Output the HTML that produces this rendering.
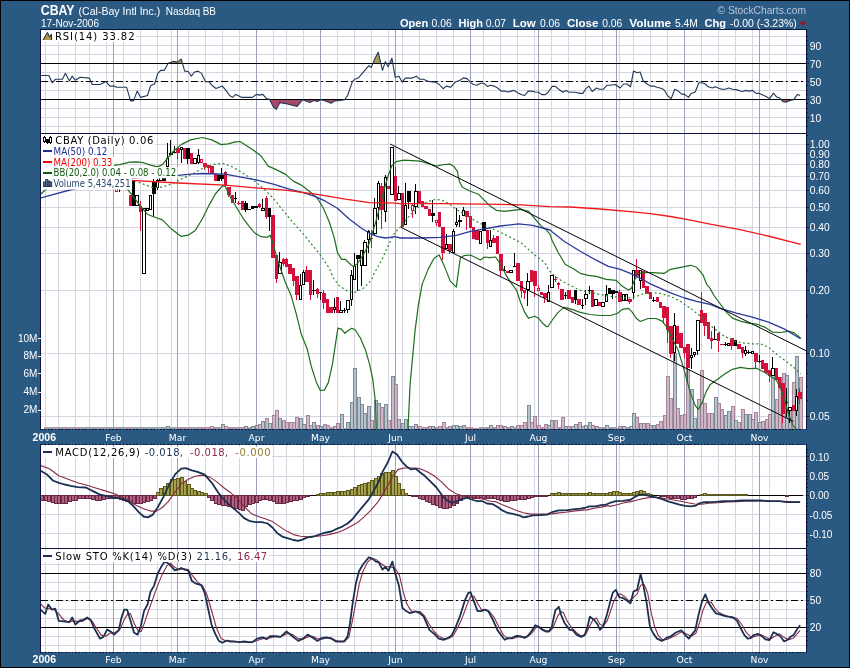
<!DOCTYPE html>
<html><head><meta charset="utf-8"><title>CBAY - StockCharts</title>
<style>html,body{margin:0;padding:0;background:#2a5982;}svg text{white-space:pre}</style></head>
<body>
<svg width="850" height="668" viewBox="0 0 850 668" style="display:block;will-change:transform">
<rect x="0" y="0" width="850" height="668" fill="#2a5982"/>
<rect x="0.5" y="0.5" width="849" height="667" fill="none" stroke="#000" stroke-width="1"/>
<defs>
<clipPath id="cr"><rect x="41" y="30" width="766" height="103"/></clipPath>
<clipPath id="cp"><rect x="41" y="134" width="766" height="295"/></clipPath>
<clipPath id="cm"><rect x="41" y="445" width="766" height="103"/></clipPath>
<clipPath id="cs"><rect x="41" y="549" width="766" height="103"/></clipPath>
</defs>
<rect x="41" y="30" width="766" height="103" fill="#fff"/>
<g clip-path="url(#cr)" shape-rendering="crispEdges">
<line x1="41" x2="807" y1="126.5" y2="126.5" stroke="#d6d6e3"/>
<line x1="41" x2="807" y1="117.5" y2="117.5" stroke="#d6d6e3"/>
<line x1="41" x2="807" y1="108.5" y2="108.5" stroke="#d6d6e3"/>
<line x1="41" x2="807" y1="99.5" y2="99.5" stroke="#d6d6e3"/>
<line x1="41" x2="807" y1="90.5" y2="90.5" stroke="#d6d6e3"/>
<line x1="41" x2="807" y1="81.5" y2="81.5" stroke="#d6d6e3"/>
<line x1="41" x2="807" y1="72.5" y2="72.5" stroke="#d6d6e3"/>
<line x1="41" x2="807" y1="63.5" y2="63.5" stroke="#d6d6e3"/>
<line x1="41" x2="807" y1="54.5" y2="54.5" stroke="#d6d6e3"/>
<line x1="41" x2="807" y1="45.5" y2="45.5" stroke="#d6d6e3"/>
<line x1="41" x2="807" y1="36.5" y2="36.5" stroke="#d6d6e3"/>
<line x1="45.5" x2="45.5" y1="30" y2="133" stroke="#d6d6e3"/>
<line x1="58.5" x2="58.5" y1="30" y2="133" stroke="#d6d6e3"/>
<line x1="75.5" x2="75.5" y1="30" y2="133" stroke="#d6d6e3"/>
<line x1="89.5" x2="89.5" y1="30" y2="133" stroke="#d6d6e3"/>
<line x1="106.5" x2="106.5" y1="30" y2="133" stroke="#d6d6e3"/>
<line x1="123.5" x2="123.5" y1="30" y2="133" stroke="#d6d6e3"/>
<line x1="140.5" x2="140.5" y1="30" y2="133" stroke="#d6d6e3"/>
<line x1="157.5" x2="157.5" y1="30" y2="133" stroke="#d6d6e3"/>
<line x1="171.5" x2="171.5" y1="30" y2="133" stroke="#d6d6e3"/>
<line x1="188.5" x2="188.5" y1="30" y2="133" stroke="#d6d6e3"/>
<line x1="205.5" x2="205.5" y1="30" y2="133" stroke="#d6d6e3"/>
<line x1="222.5" x2="222.5" y1="30" y2="133" stroke="#d6d6e3"/>
<line x1="239.5" x2="239.5" y1="30" y2="133" stroke="#d6d6e3"/>
<line x1="256.5" x2="256.5" y1="30" y2="133" stroke="#d6d6e3"/>
<line x1="273.5" x2="273.5" y1="30" y2="133" stroke="#d6d6e3"/>
<line x1="286.5" x2="286.5" y1="30" y2="133" stroke="#d6d6e3"/>
<line x1="303.5" x2="303.5" y1="30" y2="133" stroke="#d6d6e3"/>
<line x1="320.5" x2="320.5" y1="30" y2="133" stroke="#d6d6e3"/>
<line x1="337.5" x2="337.5" y1="30" y2="133" stroke="#d6d6e3"/>
<line x1="354.5" x2="354.5" y1="30" y2="133" stroke="#d6d6e3"/>
<line x1="371.5" x2="371.5" y1="30" y2="133" stroke="#d6d6e3"/>
<line x1="388.5" x2="388.5" y1="30" y2="133" stroke="#d6d6e3"/>
<line x1="402.5" x2="402.5" y1="30" y2="133" stroke="#d6d6e3"/>
<line x1="419.5" x2="419.5" y1="30" y2="133" stroke="#d6d6e3"/>
<line x1="436.5" x2="436.5" y1="30" y2="133" stroke="#d6d6e3"/>
<line x1="453.5" x2="453.5" y1="30" y2="133" stroke="#d6d6e3"/>
<line x1="470.5" x2="470.5" y1="30" y2="133" stroke="#d6d6e3"/>
<line x1="483.5" x2="483.5" y1="30" y2="133" stroke="#d6d6e3"/>
<line x1="500.5" x2="500.5" y1="30" y2="133" stroke="#d6d6e3"/>
<line x1="517.5" x2="517.5" y1="30" y2="133" stroke="#d6d6e3"/>
<line x1="534.5" x2="534.5" y1="30" y2="133" stroke="#d6d6e3"/>
<line x1="551.5" x2="551.5" y1="30" y2="133" stroke="#d6d6e3"/>
<line x1="568.5" x2="568.5" y1="30" y2="133" stroke="#d6d6e3"/>
<line x1="585.5" x2="585.5" y1="30" y2="133" stroke="#d6d6e3"/>
<line x1="602.5" x2="602.5" y1="30" y2="133" stroke="#d6d6e3"/>
<line x1="619.5" x2="619.5" y1="30" y2="133" stroke="#d6d6e3"/>
<line x1="633.5" x2="633.5" y1="30" y2="133" stroke="#d6d6e3"/>
<line x1="650.5" x2="650.5" y1="30" y2="133" stroke="#d6d6e3"/>
<line x1="667.5" x2="667.5" y1="30" y2="133" stroke="#d6d6e3"/>
<line x1="684.5" x2="684.5" y1="30" y2="133" stroke="#d6d6e3"/>
<line x1="701.5" x2="701.5" y1="30" y2="133" stroke="#d6d6e3"/>
<line x1="718.5" x2="718.5" y1="30" y2="133" stroke="#d6d6e3"/>
<line x1="735.5" x2="735.5" y1="30" y2="133" stroke="#d6d6e3"/>
<line x1="752.5" x2="752.5" y1="30" y2="133" stroke="#d6d6e3"/>
<line x1="769.5" x2="769.5" y1="30" y2="133" stroke="#d6d6e3"/>
<line x1="786.5" x2="786.5" y1="30" y2="133" stroke="#d6d6e3"/>
<line x1="113.5" x2="113.5" y1="30" y2="133" stroke="#9aa2bc"/>
<line x1="177.5" x2="177.5" y1="30" y2="133" stroke="#9aa2bc"/>
<line x1="256.5" x2="256.5" y1="30" y2="133" stroke="#9aa2bc"/>
<line x1="320.5" x2="320.5" y1="30" y2="133" stroke="#9aa2bc"/>
<line x1="395.5" x2="395.5" y1="30" y2="133" stroke="#9aa2bc"/>
<line x1="470.5" x2="470.5" y1="30" y2="133" stroke="#9aa2bc"/>
<line x1="538.5" x2="538.5" y1="30" y2="133" stroke="#9aa2bc"/>
<line x1="616.5" x2="616.5" y1="30" y2="133" stroke="#9aa2bc"/>
<line x1="684.5" x2="684.5" y1="30" y2="133" stroke="#9aa2bc"/>
<line x1="759.5" x2="759.5" y1="30" y2="133" stroke="#9aa2bc"/>
</g>
<g clip-path="url(#cr)">
<polygon points="168.2,63.3 168.2,63.3 172.9,61.4 177.2,62.1 181.2,59.1 182.4,63.3" fill="#a89a50"/>
<polygon points="372.9,63.3 374.7,59.1 378.2,52.2 380.8,63.3" fill="#a89a50"/>
<polygon points="384.8,63.3 385.3,61.6 386.2,63.3" fill="#a89a50"/>
<polygon points="389.6,63.3 391.9,58.1 392.8,63.3" fill="#a89a50"/>
<polygon points="130.1,99.3 130.6,100.9 133.4,100.9 134.0,99.3" fill="#a84868"/>
<polygon points="269.5,99.3 273.5,107.3 276.4,109.2 279.9,102.6 286.5,103.8 297.1,106.4 302.5,99.8 310.0,102.6 313.5,100.5 317.5,101.4 320.6,99.8 324.1,100.5 331.2,103.3 334.7,100.9 340.6,100.5 344.6,99.8 344.9,99.3" fill="#a84868"/>
<polygon points="780.9,99.3 782.9,101.6 786.5,102.1 790.0,100.5 793.5,99.8 793.9,99.3" fill="#a84868"/>
<line x1="41" x2="807" y1="63.5" y2="63.5" stroke="#000" stroke-width="1" shape-rendering="crispEdges"/>
<line x1="41" x2="807" y1="99.5" y2="99.5" stroke="#000" stroke-width="1" shape-rendering="crispEdges"/>
<line x1="41" x2="807" y1="81.5" y2="81.5" stroke="#000" stroke-width="1" stroke-dasharray="7 3 2 3" shape-rendering="crispEdges"/>
<polyline points="40.0,75.5 48.9,75.5 52.2,82.8 55.3,79.3 62.4,79.3 65.4,73.2 69.4,80.9 72.2,76.2 75.3,80.2 80.0,77.2 89.4,78.1 92.2,84.5 100.0,84.5 105.9,81.6 109.9,86.1 114.1,86.1 116.5,87.3 126.6,87.3 130.6,100.9 133.4,100.9 137.2,91.1 140.7,97.4 147.5,95.5 150.6,85.6 154.6,84.0 157.6,73.9 160.7,70.4 164.2,70.4 168.2,63.3 172.9,61.4 177.2,62.1 181.2,59.1 184.7,71.1 188.2,71.5 191.3,76.2 194.6,72.0 198.1,71.1 201.6,73.4 205.4,81.6 208.9,81.6 211.8,85.2 216.0,88.5 222.4,86.1 225.9,90.4 229.4,95.1 230.0,95.8 232.4,97.4 235.9,94.4 241.8,97.4 252.4,97.4 256.4,94.4 259.4,95.1 262.9,94.4 266.5,98.6 269.5,99.3 273.5,107.3 276.4,109.2 279.9,102.6 286.5,103.8 297.1,106.4 302.5,99.8 310.0,102.6 313.5,100.5 317.5,101.4 320.6,99.8 324.1,100.5 331.2,103.3 334.7,100.9 340.6,100.5 344.6,99.8 347.6,95.5 352.4,81.6 354.7,79.3 358.2,78.1 361.8,73.9 365.3,69.9 368.8,65.6 371.2,67.5 374.7,59.1 378.2,52.2 382.5,70.4 385.3,61.6 388.1,66.8 391.9,58.1 395.2,77.4 398.9,76.2 402.2,82.1 405.3,78.1 412.4,78.1 416.4,76.2 419.4,79.1 420.0,79.3 423.5,79.3 428.2,81.4 435.3,82.1 439.3,84.5 443.1,88.7 446.4,86.1 450.6,87.3 455.3,82.1 460.0,80.2 463.5,77.9 467.1,78.6 470.6,82.6 473.6,84.5 476.9,85.2 480.7,83.3 484.0,83.3 487.5,86.4 490.6,85.2 494.1,86.1 497.6,88.0 501.2,91.1 504.7,91.1 507.5,92.0 514.1,90.4 517.6,92.7 521.2,94.4 524.7,95.5 528.2,91.1 531.8,91.1 535.3,92.0 538.4,92.2 541.9,94.6 545.2,94.6 548.2,92.2 552.2,86.4 555.3,86.4 558.8,89.2 562.8,92.2 565.9,90.4 569.4,92.2 575.3,92.2 580.0,93.4 582.8,93.4 585.9,88.7 588.9,86.1 592.2,91.5 596.5,88.0 599.5,89.2 603.5,89.2 607.1,85.2 610.0,85.2 615.2,84.5 620.1,88.0 623.6,84.0 626.9,84.0 630.5,86.8 633.5,71.1 637.1,72.7 640.1,72.0 642.9,80.2 645.3,82.8 650.5,86.1 653.5,86.1 657.1,87.3 661.8,88.5 664.6,90.4 667.6,95.8 671.2,98.6 674.7,89.2 677.5,90.4 681.3,93.9 684.6,94.4 688.4,97.4 691.2,93.4 695.2,92.0 698.9,82.8 701.8,82.8 705.3,84.0 708.4,86.8 712.4,88.0 715.2,86.8 718.2,88.0 721.8,89.2 725.3,89.2 728.8,88.0 732.4,89.2 735.9,89.6 738.9,90.4 742.2,91.5 745.8,90.4 748.8,91.1 752.4,90.4 755.9,93.2 759.4,93.4 762.9,95.1 766.5,96.7 769.5,98.6 773.5,93.2 776.6,96.9 779.9,98.1 782.9,101.6 786.5,102.1 790.0,100.5 793.5,99.8 797.5,94.4 800.1,95.5" fill="none" stroke="#203858" stroke-width="1.1" stroke-linejoin="round"/>
</g>
<rect x="41" y="134" width="766" height="295" fill="#fff"/>
<g clip-path="url(#cp)" shape-rendering="crispEdges">
<line x1="41" x2="807" y1="144.5" y2="144.5" stroke="#d6d6e3"/>
<line x1="41" x2="807" y1="153.5" y2="153.5" stroke="#d6d6e3"/>
<line x1="41" x2="807" y1="164.5" y2="164.5" stroke="#d6d6e3"/>
<line x1="41" x2="807" y1="176.5" y2="176.5" stroke="#d6d6e3"/>
<line x1="41" x2="807" y1="190.5" y2="190.5" stroke="#d6d6e3"/>
<line x1="41" x2="807" y1="207.5" y2="207.5" stroke="#d6d6e3"/>
<line x1="41" x2="807" y1="227.5" y2="227.5" stroke="#d6d6e3"/>
<line x1="41" x2="807" y1="253.5" y2="253.5" stroke="#d6d6e3"/>
<line x1="41" x2="807" y1="290.5" y2="290.5" stroke="#d6d6e3"/>
<line x1="41" x2="807" y1="353.5" y2="353.5" stroke="#d6d6e3"/>
<line x1="41" x2="807" y1="416.5" y2="416.5" stroke="#d6d6e3"/>
<line x1="45.5" x2="45.5" y1="134" y2="429" stroke="#d6d6e3"/>
<line x1="58.5" x2="58.5" y1="134" y2="429" stroke="#d6d6e3"/>
<line x1="75.5" x2="75.5" y1="134" y2="429" stroke="#d6d6e3"/>
<line x1="89.5" x2="89.5" y1="134" y2="429" stroke="#d6d6e3"/>
<line x1="106.5" x2="106.5" y1="134" y2="429" stroke="#d6d6e3"/>
<line x1="123.5" x2="123.5" y1="134" y2="429" stroke="#d6d6e3"/>
<line x1="140.5" x2="140.5" y1="134" y2="429" stroke="#d6d6e3"/>
<line x1="157.5" x2="157.5" y1="134" y2="429" stroke="#d6d6e3"/>
<line x1="171.5" x2="171.5" y1="134" y2="429" stroke="#d6d6e3"/>
<line x1="188.5" x2="188.5" y1="134" y2="429" stroke="#d6d6e3"/>
<line x1="205.5" x2="205.5" y1="134" y2="429" stroke="#d6d6e3"/>
<line x1="222.5" x2="222.5" y1="134" y2="429" stroke="#d6d6e3"/>
<line x1="239.5" x2="239.5" y1="134" y2="429" stroke="#d6d6e3"/>
<line x1="256.5" x2="256.5" y1="134" y2="429" stroke="#d6d6e3"/>
<line x1="273.5" x2="273.5" y1="134" y2="429" stroke="#d6d6e3"/>
<line x1="286.5" x2="286.5" y1="134" y2="429" stroke="#d6d6e3"/>
<line x1="303.5" x2="303.5" y1="134" y2="429" stroke="#d6d6e3"/>
<line x1="320.5" x2="320.5" y1="134" y2="429" stroke="#d6d6e3"/>
<line x1="337.5" x2="337.5" y1="134" y2="429" stroke="#d6d6e3"/>
<line x1="354.5" x2="354.5" y1="134" y2="429" stroke="#d6d6e3"/>
<line x1="371.5" x2="371.5" y1="134" y2="429" stroke="#d6d6e3"/>
<line x1="388.5" x2="388.5" y1="134" y2="429" stroke="#d6d6e3"/>
<line x1="402.5" x2="402.5" y1="134" y2="429" stroke="#d6d6e3"/>
<line x1="419.5" x2="419.5" y1="134" y2="429" stroke="#d6d6e3"/>
<line x1="436.5" x2="436.5" y1="134" y2="429" stroke="#d6d6e3"/>
<line x1="453.5" x2="453.5" y1="134" y2="429" stroke="#d6d6e3"/>
<line x1="470.5" x2="470.5" y1="134" y2="429" stroke="#d6d6e3"/>
<line x1="483.5" x2="483.5" y1="134" y2="429" stroke="#d6d6e3"/>
<line x1="500.5" x2="500.5" y1="134" y2="429" stroke="#d6d6e3"/>
<line x1="517.5" x2="517.5" y1="134" y2="429" stroke="#d6d6e3"/>
<line x1="534.5" x2="534.5" y1="134" y2="429" stroke="#d6d6e3"/>
<line x1="551.5" x2="551.5" y1="134" y2="429" stroke="#d6d6e3"/>
<line x1="568.5" x2="568.5" y1="134" y2="429" stroke="#d6d6e3"/>
<line x1="585.5" x2="585.5" y1="134" y2="429" stroke="#d6d6e3"/>
<line x1="602.5" x2="602.5" y1="134" y2="429" stroke="#d6d6e3"/>
<line x1="619.5" x2="619.5" y1="134" y2="429" stroke="#d6d6e3"/>
<line x1="633.5" x2="633.5" y1="134" y2="429" stroke="#d6d6e3"/>
<line x1="650.5" x2="650.5" y1="134" y2="429" stroke="#d6d6e3"/>
<line x1="667.5" x2="667.5" y1="134" y2="429" stroke="#d6d6e3"/>
<line x1="684.5" x2="684.5" y1="134" y2="429" stroke="#d6d6e3"/>
<line x1="701.5" x2="701.5" y1="134" y2="429" stroke="#d6d6e3"/>
<line x1="718.5" x2="718.5" y1="134" y2="429" stroke="#d6d6e3"/>
<line x1="735.5" x2="735.5" y1="134" y2="429" stroke="#d6d6e3"/>
<line x1="752.5" x2="752.5" y1="134" y2="429" stroke="#d6d6e3"/>
<line x1="769.5" x2="769.5" y1="134" y2="429" stroke="#d6d6e3"/>
<line x1="786.5" x2="786.5" y1="134" y2="429" stroke="#d6d6e3"/>
<line x1="113.5" x2="113.5" y1="134" y2="429" stroke="#9aa2bc"/>
<line x1="177.5" x2="177.5" y1="134" y2="429" stroke="#9aa2bc"/>
<line x1="256.5" x2="256.5" y1="134" y2="429" stroke="#9aa2bc"/>
<line x1="320.5" x2="320.5" y1="134" y2="429" stroke="#9aa2bc"/>
<line x1="395.5" x2="395.5" y1="134" y2="429" stroke="#9aa2bc"/>
<line x1="470.5" x2="470.5" y1="134" y2="429" stroke="#9aa2bc"/>
<line x1="538.5" x2="538.5" y1="134" y2="429" stroke="#9aa2bc"/>
<line x1="616.5" x2="616.5" y1="134" y2="429" stroke="#9aa2bc"/>
<line x1="684.5" x2="684.5" y1="134" y2="429" stroke="#9aa2bc"/>
<line x1="759.5" x2="759.5" y1="134" y2="429" stroke="#9aa2bc"/>
</g>
<g clip-path="url(#cp)">
<g shape-rendering="crispEdges">
<rect x="44" y="427" width="4" height="2" fill="#c090a0"/>
<rect x="47" y="427" width="4" height="2" fill="#98a4ac"/>
<rect x="51" y="427" width="4" height="2" fill="#98a4ac"/>
<rect x="54" y="427" width="4" height="2" fill="#c090a0"/>
<rect x="57" y="427" width="4" height="2" fill="#98a4ac"/>
<rect x="61" y="427" width="4" height="2" fill="#98a4ac"/>
<rect x="64" y="427" width="4" height="2" fill="#c090a0"/>
<rect x="68" y="427" width="4" height="2" fill="#98a4ac"/>
<rect x="71" y="427" width="4" height="2" fill="#98a4ac"/>
<rect x="74" y="427" width="4" height="2" fill="#c090a0"/>
<rect x="78" y="427" width="4" height="2" fill="#98a4ac"/>
<rect x="81" y="427" width="4" height="2" fill="#98a4ac"/>
<rect x="85" y="427" width="4" height="2" fill="#c090a0"/>
<rect x="88" y="427" width="4" height="2" fill="#98a4ac"/>
<rect x="91" y="427" width="4" height="2" fill="#98a4ac"/>
<rect x="95" y="427" width="4" height="2" fill="#c090a0"/>
<rect x="98" y="427" width="4" height="2" fill="#98a4ac"/>
<rect x="102" y="427" width="4" height="2" fill="#98a4ac"/>
<rect x="105" y="427" width="4" height="2" fill="#c090a0"/>
<rect x="108" y="427" width="4" height="2" fill="#98a4ac"/>
<rect x="112" y="427" width="4" height="2" fill="#98a4ac"/>
<rect x="115" y="427" width="4" height="2" fill="#c090a0"/>
<rect x="119" y="427" width="4" height="2" fill="#98a4ac"/>
<rect x="122" y="427" width="4" height="2" fill="#98a4ac"/>
<rect x="125" y="427" width="4" height="2" fill="#c090a0"/>
<rect x="129" y="427" width="4" height="2" fill="#c090a0"/>
<rect x="132" y="427" width="4" height="2" fill="#98a4ac"/>
<rect x="136" y="427" width="4" height="2" fill="#98a4ac"/>
<rect x="139" y="427" width="4" height="2" fill="#c090a0"/>
<rect x="142" y="427" width="4" height="2" fill="#98a4ac"/>
<rect x="146" y="427" width="4" height="2" fill="#98a4ac"/>
<rect x="149" y="427" width="4" height="2" fill="#98a4ac"/>
<rect x="153" y="427" width="4" height="2" fill="#98a4ac"/>
<rect x="156" y="427" width="4" height="2" fill="#98a4ac"/>
<rect x="159" y="427" width="4" height="2" fill="#98a4ac"/>
<rect x="163" y="427" width="4" height="2" fill="#98a4ac"/>
<rect x="166.5" y="426.5" width="3" height="3" fill="#b4bcc4" stroke="#6c8090" opacity=".9"/>
<rect x="170" y="427" width="4" height="2" fill="#98a4ac"/>
<rect x="173" y="427" width="4" height="2" fill="#98a4ac"/>
<rect x="176" y="427" width="4" height="2" fill="#c090a0"/>
<rect x="180" y="427" width="4" height="2" fill="#98a4ac"/>
<rect x="183" y="427" width="4" height="2" fill="#c090a0"/>
<rect x="187" y="427" width="4" height="2" fill="#98a4ac"/>
<rect x="190" y="427" width="4" height="2" fill="#c090a0"/>
<rect x="193" y="427" width="4" height="2" fill="#98a4ac"/>
<rect x="197" y="427" width="4" height="2" fill="#98a4ac"/>
<rect x="200" y="427" width="4" height="2" fill="#c090a0"/>
<rect x="204" y="427" width="4" height="2" fill="#c090a0"/>
<rect x="207" y="427" width="4" height="2" fill="#c090a0"/>
<rect x="210.5" y="426.5" width="3" height="3" fill="#c9b3c0" stroke="#a07890" opacity=".9"/>
<rect x="214" y="427" width="4" height="2" fill="#c090a0"/>
<rect x="217" y="427" width="4" height="2" fill="#98a4ac"/>
<rect x="221.5" y="424.5" width="3" height="5" fill="#b4bcc4" stroke="#6c8090" opacity=".9"/>
<rect x="224.5" y="426.5" width="3" height="3" fill="#c9b3c0" stroke="#a07890" opacity=".9"/>
<rect x="227" y="427" width="4" height="2" fill="#c090a0"/>
<rect x="231" y="427" width="4" height="2" fill="#c090a0"/>
<rect x="234" y="427" width="4" height="2" fill="#98a4ac"/>
<rect x="238" y="427" width="4" height="2" fill="#c090a0"/>
<rect x="241" y="427" width="4" height="2" fill="#c090a0"/>
<rect x="244.5" y="426.5" width="3" height="3" fill="#b4bcc4" stroke="#6c8090" opacity=".9"/>
<rect x="248" y="427" width="4" height="2" fill="#98a4ac"/>
<rect x="251.5" y="426.5" width="3" height="3" fill="#b4bcc4" stroke="#6c8090" opacity=".9"/>
<rect x="255.5" y="425.5" width="3" height="4" fill="#b4bcc4" stroke="#6c8090" opacity=".9"/>
<rect x="258.5" y="424.5" width="3" height="5" fill="#c9b3c0" stroke="#a07890" opacity=".9"/>
<rect x="261.5" y="421.5" width="3" height="8" fill="#b4bcc4" stroke="#6c8090" opacity=".9"/>
<rect x="265.5" y="418.5" width="3" height="11" fill="#c9b3c0" stroke="#a07890" opacity=".9"/>
<rect x="268.5" y="423.5" width="3" height="6" fill="#b4bcc4" stroke="#6c8090" opacity=".9"/>
<rect x="272.5" y="415.5" width="3" height="14" fill="#c9b3c0" stroke="#a07890" opacity=".9"/>
<rect x="275.5" y="410.5" width="3" height="19" fill="#c9b3c0" stroke="#a07890" opacity=".9"/>
<rect x="278.5" y="418.5" width="3" height="11" fill="#b4bcc4" stroke="#6c8090" opacity=".9"/>
<rect x="282.5" y="420.5" width="3" height="9" fill="#c9b3c0" stroke="#a07890" opacity=".9"/>
<rect x="285.5" y="422.5" width="3" height="7" fill="#c9b3c0" stroke="#a07890" opacity=".9"/>
<rect x="289.5" y="422.5" width="3" height="7" fill="#c9b3c0" stroke="#a07890" opacity=".9"/>
<rect x="292.5" y="422.5" width="3" height="7" fill="#c9b3c0" stroke="#a07890" opacity=".9"/>
<rect x="295.5" y="417.5" width="3" height="12" fill="#c9b3c0" stroke="#a07890" opacity=".9"/>
<rect x="299.5" y="418.5" width="3" height="11" fill="#b4bcc4" stroke="#6c8090" opacity=".9"/>
<rect x="302.5" y="424.5" width="3" height="5" fill="#b4bcc4" stroke="#6c8090" opacity=".9"/>
<rect x="306.5" y="415.5" width="3" height="14" fill="#c9b3c0" stroke="#a07890" opacity=".9"/>
<rect x="309.5" y="425.5" width="3" height="4" fill="#c9b3c0" stroke="#a07890" opacity=".9"/>
<rect x="312.5" y="422.5" width="3" height="7" fill="#b4bcc4" stroke="#6c8090" opacity=".9"/>
<rect x="316.5" y="425.5" width="3" height="4" fill="#c9b3c0" stroke="#a07890" opacity=".9"/>
<rect x="319.5" y="426.5" width="3" height="3" fill="#b4bcc4" stroke="#6c8090" opacity=".9"/>
<rect x="323.5" y="424.5" width="3" height="5" fill="#c9b3c0" stroke="#a07890" opacity=".9"/>
<rect x="326.5" y="425.5" width="3" height="4" fill="#c9b3c0" stroke="#a07890" opacity=".9"/>
<rect x="329" y="427" width="4" height="2" fill="#c090a0"/>
<rect x="333.5" y="426.5" width="3" height="3" fill="#b4bcc4" stroke="#6c8090" opacity=".9"/>
<rect x="336.5" y="423.5" width="3" height="6" fill="#c9b3c0" stroke="#a07890" opacity=".9"/>
<rect x="340.5" y="414.5" width="3" height="15" fill="#b4bcc4" stroke="#6c8090" opacity=".9"/>
<rect x="343" y="428" width="4" height="1" fill="#98a4ac"/>
<rect x="346.5" y="422.5" width="3" height="7" fill="#b4bcc4" stroke="#6c8090" opacity=".9"/>
<rect x="350.5" y="402.5" width="3" height="27" fill="#b4bcc4" stroke="#6c8090" opacity=".9"/>
<rect x="353.5" y="368.5" width="3" height="61" fill="#b4bcc4" stroke="#6c8090" opacity=".9"/>
<rect x="357.5" y="397.5" width="3" height="32" fill="#b4bcc4" stroke="#6c8090" opacity=".9"/>
<rect x="360.5" y="404.5" width="3" height="25" fill="#b4bcc4" stroke="#6c8090" opacity=".9"/>
<rect x="363.5" y="413.5" width="3" height="16" fill="#b4bcc4" stroke="#6c8090" opacity=".9"/>
<rect x="367.5" y="406.5" width="3" height="23" fill="#b4bcc4" stroke="#6c8090" opacity=".9"/>
<rect x="370.5" y="420.5" width="3" height="9" fill="#c9b3c0" stroke="#a07890" opacity=".9"/>
<rect x="374.5" y="400.5" width="3" height="29" fill="#b4bcc4" stroke="#6c8090" opacity=".9"/>
<rect x="377.5" y="403.5" width="3" height="26" fill="#b4bcc4" stroke="#6c8090" opacity=".9"/>
<rect x="380.5" y="407.5" width="3" height="22" fill="#c9b3c0" stroke="#a07890" opacity=".9"/>
<rect x="384.5" y="404.5" width="3" height="25" fill="#b4bcc4" stroke="#6c8090" opacity=".9"/>
<rect x="387.5" y="420.5" width="3" height="9" fill="#c9b3c0" stroke="#a07890" opacity=".9"/>
<rect x="391.5" y="376.5" width="3" height="53" fill="#b4bcc4" stroke="#6c8090" opacity=".9"/>
<rect x="394.5" y="384.5" width="3" height="45" fill="#c9b3c0" stroke="#a07890" opacity=".9"/>
<rect x="397.5" y="419.5" width="3" height="10" fill="#b4bcc4" stroke="#6c8090" opacity=".9"/>
<rect x="401.5" y="423.5" width="3" height="6" fill="#c9b3c0" stroke="#a07890" opacity=".9"/>
<rect x="404.5" y="419.5" width="3" height="10" fill="#b4bcc4" stroke="#6c8090" opacity=".9"/>
<rect x="408.5" y="426.5" width="3" height="3" fill="#b4bcc4" stroke="#6c8090" opacity=".9"/>
<rect x="411.5" y="426.5" width="3" height="3" fill="#c9b3c0" stroke="#a07890" opacity=".9"/>
<rect x="414.5" y="424.5" width="3" height="5" fill="#b4bcc4" stroke="#6c8090" opacity=".9"/>
<rect x="418.5" y="426.5" width="3" height="3" fill="#c9b3c0" stroke="#a07890" opacity=".9"/>
<rect x="421" y="427" width="4" height="2" fill="#c090a0"/>
<rect x="425" y="427" width="4" height="2" fill="#c090a0"/>
<rect x="428.5" y="426.5" width="3" height="3" fill="#c9b3c0" stroke="#a07890" opacity=".9"/>
<rect x="431.5" y="426.5" width="3" height="3" fill="#b4bcc4" stroke="#6c8090" opacity=".9"/>
<rect x="435" y="427" width="4" height="2" fill="#c090a0"/>
<rect x="438.5" y="426.5" width="3" height="3" fill="#c9b3c0" stroke="#a07890" opacity=".9"/>
<rect x="442.5" y="422.5" width="3" height="7" fill="#c9b3c0" stroke="#a07890" opacity=".9"/>
<rect x="445" y="427" width="4" height="2" fill="#98a4ac"/>
<rect x="448.5" y="426.5" width="3" height="3" fill="#c9b3c0" stroke="#a07890" opacity=".9"/>
<rect x="452.5" y="425.5" width="3" height="4" fill="#b4bcc4" stroke="#6c8090" opacity=".9"/>
<rect x="455.5" y="425.5" width="3" height="4" fill="#b4bcc4" stroke="#6c8090" opacity=".9"/>
<rect x="459.5" y="426.5" width="3" height="3" fill="#b4bcc4" stroke="#6c8090" opacity=".9"/>
<rect x="462.5" y="425.5" width="3" height="4" fill="#b4bcc4" stroke="#6c8090" opacity=".9"/>
<rect x="465" y="427" width="4" height="2" fill="#c090a0"/>
<rect x="469" y="427" width="4" height="2" fill="#c090a0"/>
<rect x="472" y="428" width="4" height="1" fill="#c090a0"/>
<rect x="476" y="428" width="4" height="1" fill="#c090a0"/>
<rect x="479" y="427" width="4" height="2" fill="#98a4ac"/>
<rect x="482" y="427" width="4" height="2" fill="#98a4ac"/>
<rect x="486" y="427" width="4" height="2" fill="#c090a0"/>
<rect x="489.5" y="425.5" width="3" height="4" fill="#b4bcc4" stroke="#6c8090" opacity=".9"/>
<rect x="493" y="427" width="4" height="2" fill="#c090a0"/>
<rect x="496.5" y="425.5" width="3" height="4" fill="#c9b3c0" stroke="#a07890" opacity=".9"/>
<rect x="499.5" y="425.5" width="3" height="4" fill="#c9b3c0" stroke="#a07890" opacity=".9"/>
<rect x="503.5" y="426.5" width="3" height="3" fill="#b4bcc4" stroke="#6c8090" opacity=".9"/>
<rect x="506" y="427" width="4" height="2" fill="#c090a0"/>
<rect x="510.5" y="426.5" width="3" height="3" fill="#b4bcc4" stroke="#6c8090" opacity=".9"/>
<rect x="513" y="427" width="4" height="2" fill="#98a4ac"/>
<rect x="516.5" y="425.5" width="3" height="4" fill="#c9b3c0" stroke="#a07890" opacity=".9"/>
<rect x="520.5" y="425.5" width="3" height="4" fill="#c9b3c0" stroke="#a07890" opacity=".9"/>
<rect x="523.5" y="422.5" width="3" height="7" fill="#c9b3c0" stroke="#a07890" opacity=".9"/>
<rect x="527.5" y="405.5" width="3" height="24" fill="#b4bcc4" stroke="#6c8090" opacity=".9"/>
<rect x="530.5" y="422.5" width="3" height="7" fill="#c9b3c0" stroke="#a07890" opacity=".9"/>
<rect x="533.5" y="416.5" width="3" height="13" fill="#c9b3c0" stroke="#a07890" opacity=".9"/>
<rect x="537.5" y="425.5" width="3" height="4" fill="#c9b3c0" stroke="#a07890" opacity=".9"/>
<rect x="540" y="427" width="4" height="2" fill="#c090a0"/>
<rect x="544.5" y="424.5" width="3" height="5" fill="#c9b3c0" stroke="#a07890" opacity=".9"/>
<rect x="547.5" y="425.5" width="3" height="4" fill="#b4bcc4" stroke="#6c8090" opacity=".9"/>
<rect x="550.5" y="420.5" width="3" height="9" fill="#b4bcc4" stroke="#6c8090" opacity=".9"/>
<rect x="554.5" y="420.5" width="3" height="9" fill="#c9b3c0" stroke="#a07890" opacity=".9"/>
<rect x="557" y="427" width="4" height="2" fill="#c090a0"/>
<rect x="561.5" y="417.5" width="3" height="12" fill="#c9b3c0" stroke="#a07890" opacity=".9"/>
<rect x="564.5" y="426.5" width="3" height="3" fill="#b4bcc4" stroke="#6c8090" opacity=".9"/>
<rect x="567.5" y="426.5" width="3" height="3" fill="#c9b3c0" stroke="#a07890" opacity=".9"/>
<rect x="571.5" y="426.5" width="3" height="3" fill="#c9b3c0" stroke="#a07890" opacity=".9"/>
<rect x="574.5" y="424.5" width="3" height="5" fill="#b4bcc4" stroke="#6c8090" opacity=".9"/>
<rect x="578.5" y="422.5" width="3" height="7" fill="#c9b3c0" stroke="#a07890" opacity=".9"/>
<rect x="581.5" y="426.5" width="3" height="3" fill="#b4bcc4" stroke="#6c8090" opacity=".9"/>
<rect x="584.5" y="425.5" width="3" height="4" fill="#b4bcc4" stroke="#6c8090" opacity=".9"/>
<rect x="588.5" y="422.5" width="3" height="7" fill="#b4bcc4" stroke="#6c8090" opacity=".9"/>
<rect x="591.5" y="425.5" width="3" height="4" fill="#c9b3c0" stroke="#a07890" opacity=".9"/>
<rect x="595.5" y="426.5" width="3" height="3" fill="#b4bcc4" stroke="#6c8090" opacity=".9"/>
<rect x="598" y="427" width="4" height="2" fill="#c090a0"/>
<rect x="601" y="427" width="4" height="2" fill="#98a4ac"/>
<rect x="605.5" y="425.5" width="3" height="4" fill="#b4bcc4" stroke="#6c8090" opacity=".9"/>
<rect x="608" y="427" width="4" height="2" fill="#98a4ac"/>
<rect x="612" y="427" width="4" height="2" fill="#98a4ac"/>
<rect x="615" y="428" width="4" height="1" fill="#98a4ac"/>
<rect x="618.5" y="426.5" width="3" height="3" fill="#c9b3c0" stroke="#a07890" opacity=".9"/>
<rect x="622.5" y="426.5" width="3" height="3" fill="#b4bcc4" stroke="#6c8090" opacity=".9"/>
<rect x="625" y="427" width="4" height="2" fill="#98a4ac"/>
<rect x="629.5" y="426.5" width="3" height="3" fill="#c9b3c0" stroke="#a07890" opacity=".9"/>
<rect x="632.5" y="413.5" width="3" height="16" fill="#b4bcc4" stroke="#6c8090" opacity=".9"/>
<rect x="635.5" y="417.5" width="3" height="12" fill="#c9b3c0" stroke="#a07890" opacity=".9"/>
<rect x="639.5" y="423.5" width="3" height="6" fill="#b4bcc4" stroke="#6c8090" opacity=".9"/>
<rect x="642.5" y="423.5" width="3" height="6" fill="#c9b3c0" stroke="#a07890" opacity=".9"/>
<rect x="646.5" y="423.5" width="3" height="6" fill="#c9b3c0" stroke="#a07890" opacity=".9"/>
<rect x="649.5" y="425.5" width="3" height="4" fill="#c9b3c0" stroke="#a07890" opacity=".9"/>
<rect x="652.5" y="425.5" width="3" height="4" fill="#b4bcc4" stroke="#6c8090" opacity=".9"/>
<rect x="656.5" y="424.5" width="3" height="5" fill="#c9b3c0" stroke="#a07890" opacity=".9"/>
<rect x="659.5" y="421.5" width="3" height="8" fill="#c9b3c0" stroke="#a07890" opacity=".9"/>
<rect x="663.5" y="415.5" width="3" height="14" fill="#c9b3c0" stroke="#a07890" opacity=".9"/>
<rect x="666.5" y="376.5" width="3" height="53" fill="#c9b3c0" stroke="#a07890" opacity=".9"/>
<rect x="669.5" y="398.5" width="3" height="31" fill="#c9b3c0" stroke="#a07890" opacity=".9"/>
<rect x="673.5" y="353.5" width="3" height="76" fill="#b4bcc4" stroke="#6c8090" opacity=".9"/>
<rect x="676.5" y="408.5" width="3" height="21" fill="#c9b3c0" stroke="#a07890" opacity=".9"/>
<rect x="680.5" y="415.5" width="3" height="14" fill="#c9b3c0" stroke="#a07890" opacity=".9"/>
<rect x="683.5" y="414.5" width="3" height="15" fill="#c9b3c0" stroke="#a07890" opacity=".9"/>
<rect x="686.5" y="369.5" width="3" height="60" fill="#c9b3c0" stroke="#a07890" opacity=".9"/>
<rect x="690.5" y="389.5" width="3" height="40" fill="#b4bcc4" stroke="#6c8090" opacity=".9"/>
<rect x="693.5" y="418.5" width="3" height="11" fill="#b4bcc4" stroke="#6c8090" opacity=".9"/>
<rect x="697.5" y="399.5" width="3" height="30" fill="#b4bcc4" stroke="#6c8090" opacity=".9"/>
<rect x="700.5" y="370.5" width="3" height="59" fill="#c9b3c0" stroke="#a07890" opacity=".9"/>
<rect x="703.5" y="403.5" width="3" height="26" fill="#c9b3c0" stroke="#a07890" opacity=".9"/>
<rect x="707.5" y="413.5" width="3" height="16" fill="#c9b3c0" stroke="#a07890" opacity=".9"/>
<rect x="710.5" y="413.5" width="3" height="16" fill="#c9b3c0" stroke="#a07890" opacity=".9"/>
<rect x="714.5" y="397.5" width="3" height="32" fill="#b4bcc4" stroke="#6c8090" opacity=".9"/>
<rect x="717.5" y="403.5" width="3" height="26" fill="#c9b3c0" stroke="#a07890" opacity=".9"/>
<rect x="720.5" y="409.5" width="3" height="20" fill="#c9b3c0" stroke="#a07890" opacity=".9"/>
<rect x="724.5" y="415.5" width="3" height="14" fill="#b4bcc4" stroke="#6c8090" opacity=".9"/>
<rect x="727.5" y="411.5" width="3" height="18" fill="#b4bcc4" stroke="#6c8090" opacity=".9"/>
<rect x="731.5" y="406.5" width="3" height="23" fill="#c9b3c0" stroke="#a07890" opacity=".9"/>
<rect x="734.5" y="420.5" width="3" height="9" fill="#b4bcc4" stroke="#6c8090" opacity=".9"/>
<rect x="737.5" y="422.5" width="3" height="7" fill="#c9b3c0" stroke="#a07890" opacity=".9"/>
<rect x="741.5" y="409.5" width="3" height="20" fill="#c9b3c0" stroke="#a07890" opacity=".9"/>
<rect x="744.5" y="414.5" width="3" height="15" fill="#b4bcc4" stroke="#6c8090" opacity=".9"/>
<rect x="748.5" y="414.5" width="3" height="15" fill="#b4bcc4" stroke="#6c8090" opacity=".9"/>
<rect x="751.5" y="419.5" width="3" height="10" fill="#b4bcc4" stroke="#6c8090" opacity=".9"/>
<rect x="754.5" y="412.5" width="3" height="17" fill="#c9b3c0" stroke="#a07890" opacity=".9"/>
<rect x="758.5" y="422.5" width="3" height="7" fill="#b4bcc4" stroke="#6c8090" opacity=".9"/>
<rect x="761.5" y="421.5" width="3" height="8" fill="#c9b3c0" stroke="#a07890" opacity=".9"/>
<rect x="765.5" y="419.5" width="3" height="10" fill="#c9b3c0" stroke="#a07890" opacity=".9"/>
<rect x="768.5" y="414.5" width="3" height="15" fill="#c9b3c0" stroke="#a07890" opacity=".9"/>
<rect x="771.5" y="372.5" width="3" height="57" fill="#b4bcc4" stroke="#6c8090" opacity=".9"/>
<rect x="775.5" y="399.5" width="3" height="30" fill="#c9b3c0" stroke="#a07890" opacity=".9"/>
<rect x="778.5" y="377.5" width="3" height="52" fill="#c9b3c0" stroke="#a07890" opacity=".9"/>
<rect x="782.5" y="373.5" width="3" height="56" fill="#c9b3c0" stroke="#a07890" opacity=".9"/>
<rect x="785.5" y="375.5" width="3" height="54" fill="#b4bcc4" stroke="#6c8090" opacity=".9"/>
<rect x="788.5" y="407.5" width="3" height="22" fill="#b4bcc4" stroke="#6c8090" opacity=".9"/>
<rect x="792.5" y="382.5" width="3" height="47" fill="#c9b3c0" stroke="#a07890" opacity=".9"/>
<rect x="795.5" y="356.5" width="3" height="73" fill="#b4bcc4" stroke="#6c8090" opacity=".9"/>
<rect x="799.5" y="377.5" width="3" height="52" fill="#c9b3c0" stroke="#a07890" opacity=".9"/>
</g>
<g shape-rendering="crispEdges">
<rect x="116" y="184" width="1" height="8" fill="#d4103c"/>
<rect x="115.5" y="184.5" width="2" height="7" fill="#fff" stroke="#d4103c"/>
<rect x="119" y="184" width="1" height="8" fill="#000"/>
<rect x="118" y="186" width="4" height="1" fill="#000"/>
<rect x="130" y="195" width="1" height="11" fill="#d4103c"/>
<rect x="129" y="195" width="3" height="11" fill="#d4103c"/>
<rect x="133" y="181" width="1" height="25" fill="#000"/>
<rect x="132" y="181" width="3" height="25" fill="#000"/>
<rect x="136" y="195" width="1" height="11" fill="#000"/>
<rect x="135.5" y="195.5" width="3" height="10" fill="#fff" stroke="#000"/>
<rect x="140" y="201" width="1" height="30" fill="#d4103c"/>
<rect x="139" y="206" width="3" height="6" fill="#d4103c"/>
<rect x="143" y="208" width="1" height="66" fill="#000"/>
<rect x="142.5" y="208.5" width="3" height="65" fill="#fff" stroke="#000"/>
<rect x="147" y="208" width="1" height="3" fill="#000"/>
<rect x="146.5" y="208.5" width="2" height="2" fill="#fff" stroke="#000"/>
<rect x="150" y="195" width="1" height="15" fill="#000"/>
<rect x="149.5" y="195.5" width="2" height="14" fill="#fff" stroke="#000"/>
<rect x="153" y="179" width="1" height="38" fill="#000"/>
<rect x="152" y="182" width="4" height="12" fill="#000"/>
<rect x="157" y="179" width="1" height="11" fill="#000"/>
<rect x="156.5" y="180.5" width="2" height="7" fill="#fff" stroke="#000"/>
<rect x="160" y="175" width="1" height="6" fill="#000"/>
<rect x="159.5" y="175.5" width="3" height="5" fill="#fff" stroke="#000"/>
<rect x="164" y="177" width="1" height="4" fill="#000"/>
<rect x="163" y="177" width="3" height="4" fill="#000"/>
<rect x="167" y="143" width="1" height="25" fill="#000"/>
<rect x="166.5" y="158.5" width="2" height="8" fill="#fff" stroke="#000"/>
<rect x="170" y="140" width="1" height="15" fill="#000"/>
<rect x="169" y="153" width="4" height="2" fill="#000"/>
<rect x="174" y="146" width="1" height="7" fill="#000"/>
<rect x="173" y="152" width="3" height="1" fill="#000"/>
<rect x="177" y="148" width="1" height="11" fill="#d4103c"/>
<rect x="176" y="148" width="4" height="5" fill="#d4103c"/>
<rect x="181" y="147" width="1" height="16" fill="#000"/>
<rect x="180.5" y="147.5" width="2" height="2" fill="#fff" stroke="#000"/>
<rect x="184" y="148" width="1" height="11" fill="#d4103c"/>
<rect x="183" y="148" width="3" height="11" fill="#d4103c"/>
<rect x="187" y="148" width="1" height="16" fill="#000"/>
<rect x="186" y="148" width="4" height="11" fill="#000"/>
<rect x="191" y="153" width="1" height="11" fill="#d4103c"/>
<rect x="190" y="153" width="3" height="11" fill="#d4103c"/>
<rect x="194" y="158" width="1" height="6" fill="#000"/>
<rect x="193.5" y="158.5" width="3" height="5" fill="#fff" stroke="#000"/>
<rect x="198" y="149" width="1" height="15" fill="#000"/>
<rect x="197.5" y="155.5" width="2" height="7" fill="#fff" stroke="#000"/>
<rect x="201" y="159" width="1" height="4" fill="#d4103c"/>
<rect x="200.5" y="159.5" width="2" height="3" fill="#fff" stroke="#d4103c"/>
<rect x="204" y="163" width="1" height="7" fill="#d4103c"/>
<rect x="203" y="163" width="4" height="4" fill="#d4103c"/>
<rect x="208" y="165" width="1" height="8" fill="#d4103c"/>
<rect x="207" y="165" width="3" height="3" fill="#d4103c"/>
<rect x="211" y="166" width="1" height="8" fill="#d4103c"/>
<rect x="210" y="166" width="4" height="8" fill="#d4103c"/>
<rect x="215" y="174" width="1" height="7" fill="#d4103c"/>
<rect x="214" y="174" width="3" height="7" fill="#d4103c"/>
<rect x="218" y="175" width="1" height="6" fill="#000"/>
<rect x="217" y="175" width="3" height="6" fill="#000"/>
<rect x="221" y="168" width="1" height="13" fill="#000"/>
<rect x="220" y="175" width="4" height="4" fill="#000"/>
<rect x="225" y="171" width="1" height="15" fill="#d4103c"/>
<rect x="224" y="172" width="3" height="14" fill="#d4103c"/>
<rect x="228" y="187" width="1" height="10" fill="#d4103c"/>
<rect x="227" y="187" width="4" height="8" fill="#d4103c"/>
<rect x="232" y="195" width="1" height="8" fill="#d4103c"/>
<rect x="231" y="195" width="3" height="8" fill="#d4103c"/>
<rect x="235" y="192" width="1" height="11" fill="#000"/>
<rect x="234" y="198" width="3" height="1" fill="#000"/>
<rect x="238" y="201" width="1" height="4" fill="#d4103c"/>
<rect x="237" y="203" width="4" height="1" fill="#d4103c"/>
<rect x="242" y="201" width="1" height="9" fill="#d4103c"/>
<rect x="241" y="201" width="3" height="9" fill="#d4103c"/>
<rect x="245" y="201" width="1" height="11" fill="#000"/>
<rect x="244" y="203" width="4" height="7" fill="#000"/>
<rect x="249" y="209" width="1" height="1" fill="#000"/>
<rect x="248" y="209" width="3" height="1" fill="#000"/>
<rect x="252" y="206" width="1" height="3" fill="#000"/>
<rect x="251" y="206" width="3" height="3" fill="#000"/>
<rect x="255" y="206" width="1" height="2" fill="#000"/>
<rect x="254" y="206" width="4" height="2" fill="#000"/>
<rect x="259" y="203" width="1" height="5" fill="#d4103c"/>
<rect x="258" y="204" width="3" height="3" fill="#d4103c"/>
<rect x="262" y="199" width="1" height="12" fill="#000"/>
<rect x="261.5" y="208.5" width="3" height="2" fill="#fff" stroke="#000"/>
<rect x="266" y="196" width="1" height="23" fill="#d4103c"/>
<rect x="265" y="198" width="3" height="19" fill="#d4103c"/>
<rect x="269" y="208" width="1" height="23" fill="#000"/>
<rect x="268" y="208" width="3" height="9" fill="#000"/>
<rect x="272" y="215" width="1" height="43" fill="#d4103c"/>
<rect x="271" y="215" width="4" height="43" fill="#d4103c"/>
<rect x="276" y="255" width="1" height="28" fill="#d4103c"/>
<rect x="275" y="255" width="3" height="24" fill="#d4103c"/>
<rect x="279" y="252" width="1" height="22" fill="#000"/>
<rect x="278.5" y="262.5" width="3" height="11" fill="#fff" stroke="#000"/>
<rect x="283" y="258" width="1" height="8" fill="#d4103c"/>
<rect x="282" y="259" width="3" height="5" fill="#d4103c"/>
<rect x="286" y="258" width="1" height="9" fill="#d4103c"/>
<rect x="285" y="259" width="3" height="8" fill="#d4103c"/>
<rect x="289" y="264" width="1" height="10" fill="#d4103c"/>
<rect x="288" y="264" width="4" height="10" fill="#d4103c"/>
<rect x="293" y="268" width="1" height="18" fill="#d4103c"/>
<rect x="292" y="268" width="3" height="13" fill="#d4103c"/>
<rect x="296" y="276" width="1" height="24" fill="#d4103c"/>
<rect x="295" y="276" width="4" height="19" fill="#d4103c"/>
<rect x="300" y="274" width="1" height="26" fill="#000"/>
<rect x="299.5" y="285.5" width="2" height="14" fill="#fff" stroke="#000"/>
<rect x="303" y="270" width="1" height="15" fill="#000"/>
<rect x="302.5" y="272.5" width="2" height="12" fill="#fff" stroke="#000"/>
<rect x="306" y="266" width="1" height="16" fill="#d4103c"/>
<rect x="305" y="270" width="4" height="12" fill="#d4103c"/>
<rect x="310" y="270" width="1" height="30" fill="#d4103c"/>
<rect x="309" y="270" width="3" height="25" fill="#d4103c"/>
<rect x="313" y="280" width="1" height="15" fill="#000"/>
<rect x="312" y="290" width="4" height="1" fill="#000"/>
<rect x="317" y="288" width="1" height="10" fill="#d4103c"/>
<rect x="316" y="289" width="3" height="5" fill="#d4103c"/>
<rect x="320" y="292" width="1" height="8" fill="#000"/>
<rect x="319" y="292" width="3" height="1" fill="#000"/>
<rect x="323" y="290" width="1" height="19" fill="#d4103c"/>
<rect x="322" y="293" width="4" height="10" fill="#d4103c"/>
<rect x="327" y="299" width="1" height="14" fill="#d4103c"/>
<rect x="326" y="299" width="3" height="14" fill="#d4103c"/>
<rect x="330" y="307" width="1" height="6" fill="#d4103c"/>
<rect x="329" y="307" width="4" height="6" fill="#d4103c"/>
<rect x="334" y="298" width="1" height="15" fill="#000"/>
<rect x="333.5" y="307.5" width="2" height="2" fill="#fff" stroke="#000"/>
<rect x="337" y="297" width="1" height="16" fill="#d4103c"/>
<rect x="336" y="297" width="3" height="16" fill="#d4103c"/>
<rect x="340" y="301" width="1" height="12" fill="#000"/>
<rect x="339.5" y="310.5" width="3" height="2" fill="#fff" stroke="#000"/>
<rect x="344" y="308" width="1" height="5" fill="#000"/>
<rect x="343" y="310" width="3" height="1" fill="#000"/>
<rect x="347" y="300" width="1" height="13" fill="#000"/>
<rect x="346.5" y="300.5" width="3" height="9" fill="#fff" stroke="#000"/>
<rect x="351" y="270" width="1" height="36" fill="#000"/>
<rect x="350.5" y="275.5" width="2" height="24" fill="#fff" stroke="#000"/>
<rect x="354" y="253" width="1" height="27" fill="#000"/>
<rect x="353.5" y="266.5" width="2" height="13" fill="#fff" stroke="#000"/>
<rect x="357" y="255" width="1" height="36" fill="#000"/>
<rect x="356" y="255" width="4" height="4" fill="#000"/>
<rect x="361" y="250" width="1" height="36" fill="#000"/>
<rect x="360.5" y="250.5" width="2" height="15" fill="#fff" stroke="#000"/>
<rect x="364" y="240" width="1" height="26" fill="#000"/>
<rect x="363.5" y="242.5" width="3" height="23" fill="#fff" stroke="#000"/>
<rect x="368" y="230" width="1" height="23" fill="#000"/>
<rect x="367.5" y="231.5" width="2" height="8" fill="#fff" stroke="#000"/>
<rect x="371" y="230" width="1" height="18" fill="#d4103c"/>
<rect x="370" y="238" width="3" height="1" fill="#d4103c"/>
<rect x="374" y="198" width="1" height="38" fill="#000"/>
<rect x="373.5" y="208.5" width="3" height="25" fill="#fff" stroke="#000"/>
<rect x="378" y="181" width="1" height="39" fill="#000"/>
<rect x="377.5" y="183.5" width="2" height="24" fill="#fff" stroke="#000"/>
<rect x="381" y="183" width="1" height="46" fill="#d4103c"/>
<rect x="380" y="186" width="4" height="24" fill="#d4103c"/>
<rect x="385" y="175" width="1" height="47" fill="#000"/>
<rect x="384.5" y="177.5" width="2" height="34" fill="#fff" stroke="#000"/>
<rect x="388" y="186" width="1" height="3" fill="#d4103c"/>
<rect x="387" y="186" width="3" height="3" fill="#d4103c"/>
<rect x="391" y="147" width="1" height="48" fill="#000"/>
<rect x="390.5" y="147.5" width="3" height="47" fill="#fff" stroke="#000"/>
<rect x="395" y="167" width="1" height="34" fill="#d4103c"/>
<rect x="394" y="176" width="3" height="25" fill="#d4103c"/>
<rect x="398" y="186" width="1" height="14" fill="#000"/>
<rect x="397.5" y="193.5" width="3" height="6" fill="#fff" stroke="#000"/>
<rect x="402" y="193" width="1" height="34" fill="#d4103c"/>
<rect x="401" y="193" width="3" height="34" fill="#d4103c"/>
<rect x="405" y="183" width="1" height="42" fill="#000"/>
<rect x="404.5" y="205.5" width="2" height="19" fill="#fff" stroke="#000"/>
<rect x="408" y="191" width="1" height="18" fill="#000"/>
<rect x="407" y="191" width="4" height="11" fill="#000"/>
<rect x="412" y="203" width="1" height="15" fill="#d4103c"/>
<rect x="411.5" y="205.5" width="2" height="5" fill="#fff" stroke="#d4103c"/>
<rect x="415" y="184" width="1" height="30" fill="#000"/>
<rect x="414.5" y="191.5" width="3" height="15" fill="#fff" stroke="#000"/>
<rect x="419" y="191" width="1" height="12" fill="#d4103c"/>
<rect x="418" y="191" width="3" height="12" fill="#d4103c"/>
<rect x="422" y="201" width="1" height="6" fill="#d4103c"/>
<rect x="421" y="201" width="3" height="6" fill="#d4103c"/>
<rect x="425" y="206" width="1" height="3" fill="#d4103c"/>
<rect x="424" y="206" width="4" height="3" fill="#d4103c"/>
<rect x="429" y="209" width="1" height="7" fill="#d4103c"/>
<rect x="428" y="209" width="3" height="7" fill="#d4103c"/>
<rect x="432" y="200" width="1" height="22" fill="#000"/>
<rect x="431" y="213" width="4" height="3" fill="#000"/>
<rect x="436" y="220" width="1" height="6" fill="#d4103c"/>
<rect x="435.5" y="220.5" width="2" height="2" fill="#fff" stroke="#d4103c"/>
<rect x="439" y="212" width="1" height="15" fill="#d4103c"/>
<rect x="438" y="212" width="3" height="15" fill="#d4103c"/>
<rect x="442" y="227" width="1" height="33" fill="#d4103c"/>
<rect x="441" y="227" width="4" height="26" fill="#d4103c"/>
<rect x="446" y="234" width="1" height="15" fill="#000"/>
<rect x="445.5" y="244.5" width="2" height="4" fill="#fff" stroke="#000"/>
<rect x="449" y="244" width="1" height="10" fill="#d4103c"/>
<rect x="448" y="244" width="4" height="7" fill="#d4103c"/>
<rect x="453" y="229" width="1" height="24" fill="#000"/>
<rect x="452.5" y="231.5" width="2" height="21" fill="#fff" stroke="#000"/>
<rect x="456" y="208" width="1" height="19" fill="#000"/>
<rect x="455.5" y="222.5" width="2" height="2" fill="#fff" stroke="#000"/>
<rect x="459" y="215" width="1" height="12" fill="#000"/>
<rect x="458" y="220" width="4" height="2" fill="#000"/>
<rect x="463" y="207" width="1" height="9" fill="#000"/>
<rect x="462.5" y="210.5" width="2" height="5" fill="#fff" stroke="#000"/>
<rect x="466" y="211" width="1" height="19" fill="#d4103c"/>
<rect x="465" y="211" width="4" height="6" fill="#d4103c"/>
<rect x="470" y="216" width="1" height="12" fill="#d4103c"/>
<rect x="469" y="216" width="3" height="12" fill="#d4103c"/>
<rect x="473" y="227" width="1" height="12" fill="#d4103c"/>
<rect x="472" y="227" width="3" height="12" fill="#d4103c"/>
<rect x="476" y="230" width="1" height="10" fill="#d4103c"/>
<rect x="475" y="230" width="4" height="10" fill="#d4103c"/>
<rect x="480" y="231" width="1" height="13" fill="#000"/>
<rect x="479.5" y="231.5" width="2" height="12" fill="#fff" stroke="#000"/>
<rect x="483" y="222" width="1" height="9" fill="#000"/>
<rect x="482" y="222" width="4" height="9" fill="#000"/>
<rect x="487" y="230" width="1" height="19" fill="#d4103c"/>
<rect x="486" y="230" width="3" height="13" fill="#d4103c"/>
<rect x="490" y="230" width="1" height="17" fill="#000"/>
<rect x="489.5" y="240.5" width="2" height="6" fill="#fff" stroke="#000"/>
<rect x="493" y="235" width="1" height="8" fill="#d4103c"/>
<rect x="492" y="238" width="4" height="5" fill="#d4103c"/>
<rect x="497" y="236" width="1" height="18" fill="#d4103c"/>
<rect x="496" y="236" width="3" height="18" fill="#d4103c"/>
<rect x="500" y="254" width="1" height="23" fill="#d4103c"/>
<rect x="499" y="254" width="4" height="17" fill="#d4103c"/>
<rect x="504" y="266" width="1" height="6" fill="#000"/>
<rect x="503" y="270" width="3" height="1" fill="#000"/>
<rect x="507" y="271" width="1" height="2" fill="#d4103c"/>
<rect x="506" y="271" width="3" height="2" fill="#d4103c"/>
<rect x="510" y="270" width="1" height="3" fill="#000"/>
<rect x="509.5" y="270.5" width="3" height="2" fill="#fff" stroke="#000"/>
<rect x="514" y="253" width="1" height="14" fill="#000"/>
<rect x="513" y="266" width="3" height="1" fill="#000"/>
<rect x="517" y="263" width="1" height="18" fill="#d4103c"/>
<rect x="516" y="263" width="4" height="18" fill="#d4103c"/>
<rect x="521" y="281" width="1" height="17" fill="#d4103c"/>
<rect x="520" y="281" width="3" height="10" fill="#d4103c"/>
<rect x="524" y="290" width="1" height="9" fill="#d4103c"/>
<rect x="523" y="290" width="3" height="3" fill="#d4103c"/>
<rect x="527" y="273" width="1" height="33" fill="#000"/>
<rect x="526.5" y="281.5" width="3" height="8" fill="#fff" stroke="#000"/>
<rect x="531" y="270" width="1" height="12" fill="#d4103c"/>
<rect x="530" y="270" width="3" height="12" fill="#d4103c"/>
<rect x="534" y="271" width="1" height="26" fill="#d4103c"/>
<rect x="533" y="271" width="4" height="15" fill="#d4103c"/>
<rect x="538" y="285" width="1" height="6" fill="#d4103c"/>
<rect x="537.5" y="288.5" width="2" height="2" fill="#fff" stroke="#d4103c"/>
<rect x="541" y="292" width="1" height="3" fill="#d4103c"/>
<rect x="540" y="292" width="3" height="3" fill="#d4103c"/>
<rect x="544" y="293" width="1" height="10" fill="#d4103c"/>
<rect x="543" y="293" width="4" height="5" fill="#d4103c"/>
<rect x="548" y="285" width="1" height="17" fill="#000"/>
<rect x="547.5" y="292.5" width="2" height="9" fill="#fff" stroke="#000"/>
<rect x="551" y="275" width="1" height="13" fill="#000"/>
<rect x="550.5" y="275.5" width="3" height="12" fill="#fff" stroke="#000"/>
<rect x="555" y="276" width="1" height="6" fill="#d4103c"/>
<rect x="554" y="279" width="3" height="1" fill="#d4103c"/>
<rect x="558" y="282" width="1" height="7" fill="#d4103c"/>
<rect x="557" y="283" width="3" height="2" fill="#d4103c"/>
<rect x="561" y="289" width="1" height="11" fill="#d4103c"/>
<rect x="560" y="289" width="4" height="11" fill="#d4103c"/>
<rect x="565" y="292" width="1" height="7" fill="#000"/>
<rect x="564" y="295" width="3" height="1" fill="#000"/>
<rect x="568" y="290" width="1" height="9" fill="#d4103c"/>
<rect x="567" y="290" width="4" height="9" fill="#d4103c"/>
<rect x="572" y="297" width="1" height="6" fill="#d4103c"/>
<rect x="571" y="297" width="3" height="6" fill="#d4103c"/>
<rect x="575" y="290" width="1" height="14" fill="#000"/>
<rect x="574" y="290" width="3" height="10" fill="#000"/>
<rect x="578" y="299" width="1" height="6" fill="#d4103c"/>
<rect x="577" y="299" width="4" height="6" fill="#d4103c"/>
<rect x="582" y="299" width="1" height="10" fill="#000"/>
<rect x="581" y="305" width="3" height="1" fill="#000"/>
<rect x="585" y="290" width="1" height="15" fill="#000"/>
<rect x="584.5" y="294.5" width="3" height="4" fill="#fff" stroke="#000"/>
<rect x="589" y="286" width="1" height="8" fill="#000"/>
<rect x="588" y="290" width="3" height="1" fill="#000"/>
<rect x="592" y="290" width="1" height="17" fill="#d4103c"/>
<rect x="591" y="290" width="3" height="17" fill="#d4103c"/>
<rect x="595" y="299" width="1" height="7" fill="#000"/>
<rect x="594.5" y="299.5" width="3" height="6" fill="#fff" stroke="#000"/>
<rect x="599" y="302" width="1" height="4" fill="#d4103c"/>
<rect x="598" y="302" width="3" height="4" fill="#d4103c"/>
<rect x="602" y="302" width="1" height="5" fill="#000"/>
<rect x="601.5" y="302.5" width="3" height="4" fill="#fff" stroke="#000"/>
<rect x="606" y="285" width="1" height="17" fill="#000"/>
<rect x="605.5" y="294.5" width="2" height="7" fill="#fff" stroke="#000"/>
<rect x="609" y="288" width="1" height="6" fill="#000"/>
<rect x="608" y="288" width="3" height="6" fill="#000"/>
<rect x="612" y="290" width="1" height="9" fill="#000"/>
<rect x="611" y="290" width="4" height="4" fill="#000"/>
<rect x="616" y="291" width="1" height="2" fill="#000"/>
<rect x="615" y="291" width="3" height="2" fill="#000"/>
<rect x="619" y="290" width="1" height="12" fill="#d4103c"/>
<rect x="618" y="292" width="4" height="10" fill="#d4103c"/>
<rect x="623" y="294" width="1" height="7" fill="#000"/>
<rect x="622.5" y="294.5" width="2" height="6" fill="#fff" stroke="#000"/>
<rect x="626" y="294" width="1" height="7" fill="#000"/>
<rect x="625.5" y="294.5" width="2" height="6" fill="#fff" stroke="#000"/>
<rect x="629" y="299" width="1" height="5" fill="#d4103c"/>
<rect x="628" y="299" width="4" height="3" fill="#d4103c"/>
<rect x="633" y="270" width="1" height="29" fill="#000"/>
<rect x="632.5" y="270.5" width="2" height="22" fill="#fff" stroke="#000"/>
<rect x="636" y="259" width="1" height="17" fill="#d4103c"/>
<rect x="635" y="270" width="4" height="6" fill="#d4103c"/>
<rect x="640" y="270" width="1" height="19" fill="#000"/>
<rect x="639.5" y="270.5" width="2" height="10" fill="#fff" stroke="#000"/>
<rect x="643" y="271" width="1" height="17" fill="#d4103c"/>
<rect x="642" y="271" width="3" height="17" fill="#d4103c"/>
<rect x="646" y="286" width="1" height="8" fill="#d4103c"/>
<rect x="645" y="286" width="4" height="8" fill="#d4103c"/>
<rect x="650" y="292" width="1" height="7" fill="#d4103c"/>
<rect x="649" y="292" width="3" height="7" fill="#d4103c"/>
<rect x="653" y="297" width="1" height="5" fill="#000"/>
<rect x="652" y="300" width="4" height="1" fill="#000"/>
<rect x="657" y="297" width="1" height="5" fill="#d4103c"/>
<rect x="656" y="297" width="3" height="5" fill="#d4103c"/>
<rect x="660" y="302" width="1" height="6" fill="#d4103c"/>
<rect x="659" y="302" width="3" height="6" fill="#d4103c"/>
<rect x="663" y="306" width="1" height="18" fill="#d4103c"/>
<rect x="662" y="306" width="4" height="12" fill="#d4103c"/>
<rect x="667" y="307" width="1" height="36" fill="#d4103c"/>
<rect x="666" y="307" width="3" height="23" fill="#d4103c"/>
<rect x="670" y="326" width="1" height="32" fill="#d4103c"/>
<rect x="669" y="326" width="4" height="28" fill="#d4103c"/>
<rect x="674" y="313" width="1" height="48" fill="#000"/>
<rect x="673.5" y="325.5" width="2" height="27" fill="#fff" stroke="#000"/>
<rect x="677" y="326" width="1" height="18" fill="#d4103c"/>
<rect x="676" y="326" width="3" height="18" fill="#d4103c"/>
<rect x="680" y="333" width="1" height="15" fill="#d4103c"/>
<rect x="679" y="333" width="4" height="15" fill="#d4103c"/>
<rect x="684" y="347" width="1" height="11" fill="#d4103c"/>
<rect x="683" y="347" width="3" height="6" fill="#d4103c"/>
<rect x="687" y="344" width="1" height="38" fill="#d4103c"/>
<rect x="686" y="344" width="4" height="24" fill="#d4103c"/>
<rect x="691" y="348" width="1" height="21" fill="#000"/>
<rect x="690.5" y="355.5" width="2" height="2" fill="#fff" stroke="#000"/>
<rect x="694" y="352" width="1" height="5" fill="#000"/>
<rect x="693.5" y="352.5" width="2" height="2" fill="#fff" stroke="#000"/>
<rect x="697" y="320" width="1" height="35" fill="#000"/>
<rect x="696.5" y="320.5" width="3" height="30" fill="#fff" stroke="#000"/>
<rect x="701" y="292" width="1" height="31" fill="#d4103c"/>
<rect x="700" y="310" width="3" height="13" fill="#d4103c"/>
<rect x="704" y="313" width="1" height="23" fill="#d4103c"/>
<rect x="703" y="313" width="4" height="13" fill="#d4103c"/>
<rect x="708" y="322" width="1" height="17" fill="#d4103c"/>
<rect x="707" y="322" width="3" height="17" fill="#d4103c"/>
<rect x="711" y="331" width="1" height="18" fill="#d4103c"/>
<rect x="710" y="338" width="3" height="3" fill="#d4103c"/>
<rect x="714" y="326" width="1" height="14" fill="#000"/>
<rect x="713" y="339" width="4" height="1" fill="#000"/>
<rect x="718" y="333" width="1" height="19" fill="#d4103c"/>
<rect x="717" y="333" width="3" height="8" fill="#d4103c"/>
<rect x="721" y="344" width="1" height="1" fill="#d4103c"/>
<rect x="720" y="344" width="4" height="1" fill="#d4103c"/>
<rect x="725" y="342" width="1" height="4" fill="#000"/>
<rect x="724" y="344" width="3" height="1" fill="#000"/>
<rect x="728" y="343" width="1" height="3" fill="#000"/>
<rect x="727.5" y="343.5" width="2" height="2" fill="#fff" stroke="#000"/>
<rect x="731" y="338" width="1" height="12" fill="#d4103c"/>
<rect x="730" y="338" width="4" height="8" fill="#d4103c"/>
<rect x="735" y="340" width="1" height="6" fill="#000"/>
<rect x="734" y="340" width="3" height="6" fill="#000"/>
<rect x="738" y="344" width="1" height="5" fill="#d4103c"/>
<rect x="737" y="344" width="4" height="5" fill="#d4103c"/>
<rect x="742" y="347" width="1" height="11" fill="#d4103c"/>
<rect x="741" y="347" width="3" height="6" fill="#d4103c"/>
<rect x="745" y="346" width="1" height="10" fill="#000"/>
<rect x="744.5" y="350.5" width="2" height="3" fill="#fff" stroke="#000"/>
<rect x="748" y="350" width="1" height="4" fill="#000"/>
<rect x="747" y="352" width="4" height="1" fill="#000"/>
<rect x="752" y="351" width="1" height="3" fill="#000"/>
<rect x="751.5" y="351.5" width="2" height="2" fill="#fff" stroke="#000"/>
<rect x="755" y="353" width="1" height="15" fill="#d4103c"/>
<rect x="754" y="353" width="4" height="9" fill="#d4103c"/>
<rect x="759" y="355" width="1" height="8" fill="#000"/>
<rect x="758" y="361" width="3" height="1" fill="#000"/>
<rect x="762" y="360" width="1" height="9" fill="#d4103c"/>
<rect x="761" y="360" width="3" height="9" fill="#d4103c"/>
<rect x="765" y="363" width="1" height="10" fill="#d4103c"/>
<rect x="764" y="363" width="4" height="10" fill="#d4103c"/>
<rect x="769" y="370" width="1" height="12" fill="#d4103c"/>
<rect x="768" y="370" width="3" height="6" fill="#d4103c"/>
<rect x="772" y="357" width="1" height="19" fill="#000"/>
<rect x="771.5" y="368.5" width="3" height="7" fill="#fff" stroke="#000"/>
<rect x="776" y="368" width="1" height="12" fill="#d4103c"/>
<rect x="775" y="368" width="3" height="12" fill="#d4103c"/>
<rect x="779" y="377" width="1" height="11" fill="#d4103c"/>
<rect x="778" y="377" width="3" height="11" fill="#d4103c"/>
<rect x="782" y="383" width="1" height="40" fill="#d4103c"/>
<rect x="781" y="383" width="4" height="31" fill="#d4103c"/>
<rect x="786" y="388" width="1" height="29" fill="#000"/>
<rect x="785" y="402" width="3" height="1" fill="#000"/>
<rect x="789" y="407" width="1" height="16" fill="#000"/>
<rect x="788.5" y="407.5" width="3" height="3" fill="#fff" stroke="#000"/>
<rect x="793" y="405" width="1" height="6" fill="#d4103c"/>
<rect x="792" y="405" width="3" height="6" fill="#d4103c"/>
<rect x="796" y="389" width="1" height="27" fill="#000"/>
<rect x="795.5" y="396.5" width="2" height="14" fill="#fff" stroke="#000"/>
<rect x="799" y="388" width="1" height="16" fill="#d4103c"/>
<rect x="798" y="392" width="4" height="7" fill="#d4103c"/>
</g>
<polyline points="40.0,183.0 90.0,182.0 133.0,180.0 145.9,185.1 153.6,187.7 162.7,187.0 171.7,183.8 180.8,179.3 192.4,174.1 202.8,168.3 213.1,164.4 223.5,163.5 233.0,167.1 241.1,172.1 249.1,177.1 257.1,183.1 265.2,190.2 273.2,198.2 281.2,208.2 289.3,218.3 297.3,227.3 305.3,236.3 313.4,246.4 321.4,256.4 329.4,268.5 333.4,278.0 339.5,286.1 347.5,291.1 355.5,292.1 363.6,288.1 371.6,280.0 373.6,274.5 381.6,260.4 389.7,242.4 395.1,232.3 400.1,227.4 408.1,217.3 414.1,211.3 420.2,205.3 428.2,201.3 436.2,199.3 442.2,200.3 448.3,203.3 456.3,209.3 464.3,214.3 472.4,219.3 480.4,223.4 488.4,227.4 496.5,230.4 504.5,234.4 512.5,238.4 520.6,242.4 528.6,249.5 536.6,256.5 544.7,262.5 548.0,269.3 556.1,277.3 564.1,282.3 572.1,286.3 580.2,290.4 590.2,292.4 600.2,294.4 610.3,296.4 620.3,297.4 628.4,298.0 636.4,296.4 644.4,293.4 652.4,292.8 660.5,293.4 670.5,296.4 680.6,301.4 690.6,308.4 700.6,316.5 710.1,325.5 716.3,330.1 724.3,336.2 734.4,341.2 744.4,343.2 752.4,343.8 760.5,343.8 768.5,347.2 776.5,354.2 784.6,360.3 792.6,366.3 800.6,373.9" fill="none" stroke="#2e8a2e" stroke-width="1.2" stroke-dasharray="2 2.5"/>
<polyline points="40.0,172.0 70.0,170.0 100.0,167.0 112.9,165.3 120.0,164.6 129.4,162.2 136.5,161.8 143.5,162.7 150.6,165.1 157.6,166.9 162.4,164.6 168.2,157.5 174.1,150.5 181.2,144.6 190.6,139.9 202.4,137.5 211.8,139.9 221.2,144.6 228.2,143.9 235.3,141.8 240.0,141.5 253.1,150.0 261.1,156.0 268.2,166.1 275.2,169.1 285.2,174.1 293.3,181.1 301.3,185.1 309.3,191.2 317.4,198.2 323.4,208.2 329.4,222.3 334.4,238.4 337.4,252.4 341.5,259.4 345.5,259.4 350.5,264.5 353.5,266.5 357.5,263.5 363.6,254.4 369.6,242.4 375.6,222.3 381.6,200.2 384.0,190.2 388.0,176.2 392.0,165.1 396.1,161.7 404.1,160.1 420.2,161.1 430.2,164.1 436.2,166.1 444.3,164.5 450.3,164.1 454.3,167.1 457.3,171.1 459.3,181.2 462.3,187.2 470.4,191.2 478.4,194.2 484.4,200.3 490.4,206.3 496.5,210.3 504.5,211.3 512.5,210.3 520.6,209.3 528.6,211.3 534.6,218.3 540.6,225.4 546.7,230.4 550.1,234.4 552.0,240.2 558.1,252.2 565.1,264.3 574.1,269.3 580.2,273.3 588.2,275.3 596.2,276.3 606.3,279.3 616.3,280.3 622.3,286.3 628.4,290.0 631.4,288.4 634.4,280.3 638.4,273.3 644.4,272.7 652.4,272.7 664.5,273.3 670.5,269.3 680.6,267.3 690.6,265.3 696.6,267.3 702.7,274.3 706.7,284.3 710.1,288.4 714.3,296.0 720.3,304.0 726.3,312.1 732.4,318.1 740.4,321.1 748.4,323.1 756.5,324.1 764.5,327.1 772.5,332.1 780.6,332.5 788.6,331.1 794.6,333.1 800.6,338.2" fill="none" stroke="#1e6e1e" stroke-width="1.2" stroke-linejoin="round"/>
<polyline points="40.6,194.3 45.8,189.5 52.0,185.0 90.0,183.0 120.0,184.0 127.8,189.6 140.7,206.4 147.2,214.2 153.6,216.8 162.4,219.9 171.8,229.3 181.2,236.4 188.2,235.2 195.3,230.5 202.4,218.7 209.4,204.6 215.3,194.0 222.4,185.8 225.0,186.1 231.0,198.2 237.0,208.2 243.1,218.3 249.1,226.3 255.1,233.3 261.1,236.7 267.2,237.3 270.2,235.3 273.2,244.4 277.2,258.4 281.2,270.5 285.2,282.0 291.3,296.1 296.3,314.2 301.3,334.3 307.3,349.3 311.3,366.4 316.4,382.4 320.4,390.5 324.4,390.1 328.4,382.4 332.4,364.4 335.4,344.3 337.9,328.2 341.5,329.2 344.9,333.3 348.5,330.2 351.9,328.2 355.5,330.2 360.5,338.3 365.6,350.3 369.6,364.4 372.6,378.4 374.6,394.5 375.6,404.1 376.5,440.0 407.5,440.0 410.1,384.1 412.1,362.4 415.1,330.3 418.2,306.2 422.2,284.1 428.2,269.1 434.2,258.0 439.2,255.0 444.3,266.1 450.3,281.1 456.3,287.1 460.3,258.0 464.3,255.6 470.4,255.0 476.4,258.0 480.4,260.0 484.4,257.0 489.4,257.6 495.5,257.0 500.5,264.1 505.5,274.1 510.5,282.1 516.5,290.2 520.6,302.2 524.6,312.2 528.6,318.3 534.6,316.3 538.6,318.3 542.7,323.3 546.7,326.7 548.0,326.5 552.0,320.5 558.1,312.4 564.1,307.4 572.1,309.4 580.2,312.4 590.2,314.5 600.2,315.5 610.3,315.5 617.3,313.5 622.3,309.4 628.4,308.4 632.4,312.4 636.4,318.5 640.4,321.5 648.0,318.5 656.1,318.5 662.1,321.1 666.1,326.1 672.1,338.2 678.2,350.2 684.2,370.3 690.2,392.4 695.2,405.4 698.2,409.5 702.2,402.4 706.3,391.4 710.3,384.4 716.3,380.3 724.3,374.3 732.4,369.3 740.4,367.3 748.4,368.7 756.5,368.3 764.5,372.3 770.5,376.3 776.5,380.3 780.6,388.4 784.6,400.4 788.6,414.5 792.6,424.5 796.6,430.1" fill="none" stroke="#1e6e1e" stroke-width="1.2" stroke-linejoin="round"/>
<polyline points="40.0,198.2 71.7,189.5 100.0,183.5 125.0,179.0 131.0,178.0 160.0,176.0 178.2,175.4 190.6,174.2 202.8,173.5 218.0,174.0 225.0,174.1 241.1,177.1 257.1,180.1 273.2,184.1 289.3,189.2 305.3,193.2 315.4,196.6 325.4,201.2 337.4,208.2 349.5,219.3 361.5,228.3 369.6,233.3 377.6,236.7 385.6,238.0 395.1,236.7 400.1,238.0 420.2,238.0 440.2,237.4 456.3,235.4 470.4,231.4 484.4,228.8 500.5,226.0 518.6,223.8 532.6,225.4 550.1,230.0 552.0,231.7 564.1,241.2 580.2,251.2 596.2,260.2 608.3,266.3 620.3,269.3 630.4,273.3 640.4,278.3 650.4,283.9 660.5,288.4 670.5,292.8 684.6,298.0 696.6,301.4 710.1,304.4 720.3,308.4 736.4,313.1 752.4,317.1 768.5,322.1 784.6,329.1 794.6,335.2 800.6,338.6" fill="none" stroke="#2a3a9c" stroke-width="1.3" stroke-linejoin="round"/>
<polyline points="40.0,176.5 90.0,178.5 131.6,180.3 178.0,183.0 225.0,185.1 255.1,187.8 285.2,190.2 315.4,194.2 345.5,199.2 369.6,202.6 395.1,203.2 400.1,203.7 440.2,203.7 500.5,204.3 520.6,204.9 550.1,206.7 570.1,207.0 600.2,209.0 630.4,211.6 650.4,213.7 670.5,216.5 690.6,220.1 710.1,224.1 740.0,229.6 770.0,236.5 800.8,244.3" fill="none" stroke="#f01818" stroke-width="1.3" stroke-linejoin="round"/>
<g stroke="#000" stroke-width="1">
<line x1="390.2" y1="144.1" x2="807" y2="351.2"/>
<line x1="401" y1="227.4" x2="793.6" y2="421.5"/>
</g>
</g>
<rect x="41" y="445" width="766" height="103" fill="#fff"/>
<g clip-path="url(#cm)" shape-rendering="crispEdges">
<line x1="41" x2="807" y1="456.5" y2="456.5" stroke="#d6d6e3"/>
<line x1="41" x2="807" y1="476.5" y2="476.5" stroke="#d6d6e3"/>
<line x1="41" x2="807" y1="495.5" y2="495.5" stroke="#d6d6e3"/>
<line x1="41" x2="807" y1="514.5" y2="514.5" stroke="#d6d6e3"/>
<line x1="41" x2="807" y1="533.5" y2="533.5" stroke="#d6d6e3"/>
<line x1="45.5" x2="45.5" y1="445" y2="548" stroke="#d6d6e3"/>
<line x1="58.5" x2="58.5" y1="445" y2="548" stroke="#d6d6e3"/>
<line x1="75.5" x2="75.5" y1="445" y2="548" stroke="#d6d6e3"/>
<line x1="89.5" x2="89.5" y1="445" y2="548" stroke="#d6d6e3"/>
<line x1="106.5" x2="106.5" y1="445" y2="548" stroke="#d6d6e3"/>
<line x1="123.5" x2="123.5" y1="445" y2="548" stroke="#d6d6e3"/>
<line x1="140.5" x2="140.5" y1="445" y2="548" stroke="#d6d6e3"/>
<line x1="157.5" x2="157.5" y1="445" y2="548" stroke="#d6d6e3"/>
<line x1="171.5" x2="171.5" y1="445" y2="548" stroke="#d6d6e3"/>
<line x1="188.5" x2="188.5" y1="445" y2="548" stroke="#d6d6e3"/>
<line x1="205.5" x2="205.5" y1="445" y2="548" stroke="#d6d6e3"/>
<line x1="222.5" x2="222.5" y1="445" y2="548" stroke="#d6d6e3"/>
<line x1="239.5" x2="239.5" y1="445" y2="548" stroke="#d6d6e3"/>
<line x1="256.5" x2="256.5" y1="445" y2="548" stroke="#d6d6e3"/>
<line x1="273.5" x2="273.5" y1="445" y2="548" stroke="#d6d6e3"/>
<line x1="286.5" x2="286.5" y1="445" y2="548" stroke="#d6d6e3"/>
<line x1="303.5" x2="303.5" y1="445" y2="548" stroke="#d6d6e3"/>
<line x1="320.5" x2="320.5" y1="445" y2="548" stroke="#d6d6e3"/>
<line x1="337.5" x2="337.5" y1="445" y2="548" stroke="#d6d6e3"/>
<line x1="354.5" x2="354.5" y1="445" y2="548" stroke="#d6d6e3"/>
<line x1="371.5" x2="371.5" y1="445" y2="548" stroke="#d6d6e3"/>
<line x1="388.5" x2="388.5" y1="445" y2="548" stroke="#d6d6e3"/>
<line x1="402.5" x2="402.5" y1="445" y2="548" stroke="#d6d6e3"/>
<line x1="419.5" x2="419.5" y1="445" y2="548" stroke="#d6d6e3"/>
<line x1="436.5" x2="436.5" y1="445" y2="548" stroke="#d6d6e3"/>
<line x1="453.5" x2="453.5" y1="445" y2="548" stroke="#d6d6e3"/>
<line x1="470.5" x2="470.5" y1="445" y2="548" stroke="#d6d6e3"/>
<line x1="483.5" x2="483.5" y1="445" y2="548" stroke="#d6d6e3"/>
<line x1="500.5" x2="500.5" y1="445" y2="548" stroke="#d6d6e3"/>
<line x1="517.5" x2="517.5" y1="445" y2="548" stroke="#d6d6e3"/>
<line x1="534.5" x2="534.5" y1="445" y2="548" stroke="#d6d6e3"/>
<line x1="551.5" x2="551.5" y1="445" y2="548" stroke="#d6d6e3"/>
<line x1="568.5" x2="568.5" y1="445" y2="548" stroke="#d6d6e3"/>
<line x1="585.5" x2="585.5" y1="445" y2="548" stroke="#d6d6e3"/>
<line x1="602.5" x2="602.5" y1="445" y2="548" stroke="#d6d6e3"/>
<line x1="619.5" x2="619.5" y1="445" y2="548" stroke="#d6d6e3"/>
<line x1="633.5" x2="633.5" y1="445" y2="548" stroke="#d6d6e3"/>
<line x1="650.5" x2="650.5" y1="445" y2="548" stroke="#d6d6e3"/>
<line x1="667.5" x2="667.5" y1="445" y2="548" stroke="#d6d6e3"/>
<line x1="684.5" x2="684.5" y1="445" y2="548" stroke="#d6d6e3"/>
<line x1="701.5" x2="701.5" y1="445" y2="548" stroke="#d6d6e3"/>
<line x1="718.5" x2="718.5" y1="445" y2="548" stroke="#d6d6e3"/>
<line x1="735.5" x2="735.5" y1="445" y2="548" stroke="#d6d6e3"/>
<line x1="752.5" x2="752.5" y1="445" y2="548" stroke="#d6d6e3"/>
<line x1="769.5" x2="769.5" y1="445" y2="548" stroke="#d6d6e3"/>
<line x1="786.5" x2="786.5" y1="445" y2="548" stroke="#d6d6e3"/>
<line x1="113.5" x2="113.5" y1="445" y2="548" stroke="#9aa2bc"/>
<line x1="177.5" x2="177.5" y1="445" y2="548" stroke="#9aa2bc"/>
<line x1="256.5" x2="256.5" y1="445" y2="548" stroke="#9aa2bc"/>
<line x1="320.5" x2="320.5" y1="445" y2="548" stroke="#9aa2bc"/>
<line x1="395.5" x2="395.5" y1="445" y2="548" stroke="#9aa2bc"/>
<line x1="470.5" x2="470.5" y1="445" y2="548" stroke="#9aa2bc"/>
<line x1="538.5" x2="538.5" y1="445" y2="548" stroke="#9aa2bc"/>
<line x1="616.5" x2="616.5" y1="445" y2="548" stroke="#9aa2bc"/>
<line x1="684.5" x2="684.5" y1="445" y2="548" stroke="#9aa2bc"/>
<line x1="759.5" x2="759.5" y1="445" y2="548" stroke="#9aa2bc"/>
</g>
<g clip-path="url(#cm)">
<line x1="41" x2="803" y1="495.5" y2="495.5" stroke="#000" shape-rendering="crispEdges"/>
<g shape-rendering="crispEdges">
<rect x="40.5" y="495.5" width="3" height="5" fill="#b0607e" stroke="#6a2848"/>
<rect x="44.5" y="495.5" width="3" height="5" fill="#b0607e" stroke="#6a2848"/>
<rect x="47.5" y="495.5" width="3" height="6" fill="#b0607e" stroke="#6a2848"/>
<rect x="51.5" y="495.5" width="3" height="7" fill="#b0607e" stroke="#6a2848"/>
<rect x="54.5" y="495.5" width="3" height="8" fill="#b0607e" stroke="#6a2848"/>
<rect x="57.5" y="495.5" width="3" height="8" fill="#b0607e" stroke="#6a2848"/>
<rect x="61.5" y="495.5" width="3" height="8" fill="#b0607e" stroke="#6a2848"/>
<rect x="64.5" y="495.5" width="3" height="8" fill="#b0607e" stroke="#6a2848"/>
<rect x="68.5" y="495.5" width="3" height="6" fill="#b0607e" stroke="#6a2848"/>
<rect x="71.5" y="495.5" width="3" height="5" fill="#b0607e" stroke="#6a2848"/>
<rect x="74.5" y="495.5" width="3" height="5" fill="#b0607e" stroke="#6a2848"/>
<rect x="78.5" y="495.5" width="3" height="3" fill="#b0607e" stroke="#6a2848"/>
<rect x="81.5" y="495.5" width="3" height="3" fill="#b0607e" stroke="#6a2848"/>
<rect x="85.5" y="495.5" width="3" height="3" fill="#b0607e" stroke="#6a2848"/>
<rect x="88.5" y="495.5" width="3" height="3" fill="#b0607e" stroke="#6a2848"/>
<rect x="91.5" y="495.5" width="3" height="4" fill="#b0607e" stroke="#6a2848"/>
<rect x="95.5" y="495.5" width="3" height="5" fill="#b0607e" stroke="#6a2848"/>
<rect x="98.5" y="495.5" width="3" height="5" fill="#b0607e" stroke="#6a2848"/>
<rect x="102.5" y="495.5" width="3" height="4" fill="#b0607e" stroke="#6a2848"/>
<rect x="105.5" y="495.5" width="3" height="3" fill="#b0607e" stroke="#6a2848"/>
<rect x="108.5" y="495.5" width="3" height="3" fill="#b0607e" stroke="#6a2848"/>
<rect x="112.5" y="495.5" width="3" height="3" fill="#b0607e" stroke="#6a2848"/>
<rect x="115.5" y="495.5" width="3" height="3" fill="#b0607e" stroke="#6a2848"/>
<rect x="119.5" y="495.5" width="3" height="4" fill="#b0607e" stroke="#6a2848"/>
<rect x="122.5" y="495.5" width="3" height="5" fill="#b0607e" stroke="#6a2848"/>
<rect x="125.5" y="495.5" width="3" height="6" fill="#b0607e" stroke="#6a2848"/>
<rect x="129.5" y="495.5" width="3" height="6" fill="#b0607e" stroke="#6a2848"/>
<rect x="132.5" y="495.5" width="3" height="8" fill="#b0607e" stroke="#6a2848"/>
<rect x="136.5" y="495.5" width="3" height="8" fill="#b0607e" stroke="#6a2848"/>
<rect x="139.5" y="495.5" width="3" height="8" fill="#b0607e" stroke="#6a2848"/>
<rect x="142.5" y="495.5" width="3" height="7" fill="#b0607e" stroke="#6a2848"/>
<rect x="146.5" y="495.5" width="3" height="6" fill="#b0607e" stroke="#6a2848"/>
<rect x="149.5" y="495.5" width="3" height="5" fill="#b0607e" stroke="#6a2848"/>
<rect x="153.5" y="495.5" width="3" height="3" fill="#b0607e" stroke="#6a2848"/>
<rect x="156.5" y="492.5" width="3" height="3" fill="#a8a048" stroke="#5a5a20"/>
<rect x="159.5" y="488.5" width="3" height="7" fill="#a8a048" stroke="#5a5a20"/>
<rect x="163.5" y="486.5" width="3" height="9" fill="#a8a048" stroke="#5a5a20"/>
<rect x="166.5" y="483.5" width="3" height="12" fill="#a8a048" stroke="#5a5a20"/>
<rect x="170.5" y="479.5" width="3" height="16" fill="#a8a048" stroke="#5a5a20"/>
<rect x="173.5" y="479.5" width="3" height="16" fill="#a8a048" stroke="#5a5a20"/>
<rect x="176.5" y="478.5" width="3" height="17" fill="#a8a048" stroke="#5a5a20"/>
<rect x="180.5" y="477.5" width="3" height="18" fill="#a8a048" stroke="#5a5a20"/>
<rect x="183.5" y="481.5" width="3" height="14" fill="#a8a048" stroke="#5a5a20"/>
<rect x="187.5" y="484.5" width="3" height="11" fill="#a8a048" stroke="#5a5a20"/>
<rect x="190.5" y="488.5" width="3" height="7" fill="#a8a048" stroke="#5a5a20"/>
<rect x="193.5" y="490.5" width="3" height="5" fill="#a8a048" stroke="#5a5a20"/>
<rect x="197.5" y="491.5" width="3" height="4" fill="#a8a048" stroke="#5a5a20"/>
<rect x="200.5" y="492.5" width="3" height="3" fill="#a8a048" stroke="#5a5a20"/>
<rect x="204.5" y="493.5" width="3" height="2" fill="#a8a048" stroke="#5a5a20"/>
<rect x="207.5" y="495.5" width="3" height="2" fill="#b0607e" stroke="#6a2848"/>
<rect x="210.5" y="495.5" width="3" height="5" fill="#b0607e" stroke="#6a2848"/>
<rect x="214.5" y="495.5" width="3" height="8" fill="#b0607e" stroke="#6a2848"/>
<rect x="217.5" y="495.5" width="3" height="9" fill="#b0607e" stroke="#6a2848"/>
<rect x="221.5" y="495.5" width="3" height="10" fill="#b0607e" stroke="#6a2848"/>
<rect x="224.5" y="495.5" width="3" height="10" fill="#b0607e" stroke="#6a2848"/>
<rect x="227.5" y="495.5" width="3" height="11" fill="#b0607e" stroke="#6a2848"/>
<rect x="231.5" y="495.5" width="3" height="12" fill="#b0607e" stroke="#6a2848"/>
<rect x="234.5" y="495.5" width="3" height="13" fill="#b0607e" stroke="#6a2848"/>
<rect x="238.5" y="495.5" width="3" height="14" fill="#b0607e" stroke="#6a2848"/>
<rect x="241.5" y="495.5" width="3" height="15" fill="#b0607e" stroke="#6a2848"/>
<rect x="244.5" y="495.5" width="3" height="11" fill="#b0607e" stroke="#6a2848"/>
<rect x="248.5" y="495.5" width="3" height="9" fill="#b0607e" stroke="#6a2848"/>
<rect x="251.5" y="495.5" width="3" height="8" fill="#b0607e" stroke="#6a2848"/>
<rect x="255.5" y="495.5" width="3" height="7" fill="#b0607e" stroke="#6a2848"/>
<rect x="258.5" y="495.5" width="3" height="5" fill="#b0607e" stroke="#6a2848"/>
<rect x="261.5" y="495.5" width="3" height="4" fill="#b0607e" stroke="#6a2848"/>
<rect x="265.5" y="495.5" width="3" height="4" fill="#b0607e" stroke="#6a2848"/>
<rect x="268.5" y="495.5" width="3" height="5" fill="#b0607e" stroke="#6a2848"/>
<rect x="272.5" y="495.5" width="3" height="6" fill="#b0607e" stroke="#6a2848"/>
<rect x="275.5" y="495.5" width="3" height="8" fill="#b0607e" stroke="#6a2848"/>
<rect x="278.5" y="495.5" width="3" height="8" fill="#b0607e" stroke="#6a2848"/>
<rect x="282.5" y="495.5" width="3" height="8" fill="#b0607e" stroke="#6a2848"/>
<rect x="285.5" y="495.5" width="3" height="7" fill="#b0607e" stroke="#6a2848"/>
<rect x="289.5" y="495.5" width="3" height="6" fill="#b0607e" stroke="#6a2848"/>
<rect x="292.5" y="495.5" width="3" height="5" fill="#b0607e" stroke="#6a2848"/>
<rect x="295.5" y="495.5" width="3" height="5" fill="#b0607e" stroke="#6a2848"/>
<rect x="299.5" y="495.5" width="3" height="4" fill="#b0607e" stroke="#6a2848"/>
<rect x="302.5" y="495.5" width="3" height="2" fill="#b0607e" stroke="#6a2848"/>
<rect x="306.5" y="495.5" width="3" height="1" fill="#b0607e" stroke="#6a2848"/>
<rect x="316.5" y="494.5" width="3" height="1" fill="#a8a048" stroke="#5a5a20"/>
<rect x="319.5" y="493.5" width="3" height="2" fill="#a8a048" stroke="#5a5a20"/>
<rect x="323.5" y="493.5" width="3" height="2" fill="#a8a048" stroke="#5a5a20"/>
<rect x="326.5" y="492.5" width="3" height="3" fill="#a8a048" stroke="#5a5a20"/>
<rect x="329.5" y="492.5" width="3" height="3" fill="#a8a048" stroke="#5a5a20"/>
<rect x="333.5" y="492.5" width="3" height="3" fill="#a8a048" stroke="#5a5a20"/>
<rect x="336.5" y="491.5" width="3" height="4" fill="#a8a048" stroke="#5a5a20"/>
<rect x="340.5" y="491.5" width="3" height="4" fill="#a8a048" stroke="#5a5a20"/>
<rect x="343.5" y="491.5" width="3" height="4" fill="#a8a048" stroke="#5a5a20"/>
<rect x="346.5" y="490.5" width="3" height="5" fill="#a8a048" stroke="#5a5a20"/>
<rect x="350.5" y="489.5" width="3" height="6" fill="#a8a048" stroke="#5a5a20"/>
<rect x="353.5" y="487.5" width="3" height="8" fill="#a8a048" stroke="#5a5a20"/>
<rect x="357.5" y="485.5" width="3" height="10" fill="#a8a048" stroke="#5a5a20"/>
<rect x="360.5" y="484.5" width="3" height="11" fill="#a8a048" stroke="#5a5a20"/>
<rect x="363.5" y="483.5" width="3" height="12" fill="#a8a048" stroke="#5a5a20"/>
<rect x="367.5" y="482.5" width="3" height="13" fill="#a8a048" stroke="#5a5a20"/>
<rect x="370.5" y="480.5" width="3" height="15" fill="#a8a048" stroke="#5a5a20"/>
<rect x="374.5" y="478.5" width="3" height="17" fill="#a8a048" stroke="#5a5a20"/>
<rect x="377.5" y="476.5" width="3" height="19" fill="#a8a048" stroke="#5a5a20"/>
<rect x="380.5" y="473.5" width="3" height="22" fill="#a8a048" stroke="#5a5a20"/>
<rect x="384.5" y="472.5" width="3" height="23" fill="#a8a048" stroke="#5a5a20"/>
<rect x="387.5" y="472.5" width="3" height="23" fill="#a8a048" stroke="#5a5a20"/>
<rect x="391.5" y="470.5" width="3" height="25" fill="#a8a048" stroke="#5a5a20"/>
<rect x="394.5" y="476.5" width="3" height="19" fill="#a8a048" stroke="#5a5a20"/>
<rect x="397.5" y="483.5" width="3" height="12" fill="#a8a048" stroke="#5a5a20"/>
<rect x="401.5" y="489.5" width="3" height="6" fill="#a8a048" stroke="#5a5a20"/>
<rect x="404.5" y="493.5" width="3" height="2" fill="#a8a048" stroke="#5a5a20"/>
<rect x="411.5" y="495.5" width="3" height="1" fill="#b0607e" stroke="#6a2848"/>
<rect x="414.5" y="495.5" width="3" height="1" fill="#b0607e" stroke="#6a2848"/>
<rect x="418.5" y="495.5" width="3" height="3" fill="#b0607e" stroke="#6a2848"/>
<rect x="421.5" y="495.5" width="3" height="4" fill="#b0607e" stroke="#6a2848"/>
<rect x="425.5" y="495.5" width="3" height="6" fill="#b0607e" stroke="#6a2848"/>
<rect x="428.5" y="495.5" width="3" height="7" fill="#b0607e" stroke="#6a2848"/>
<rect x="431.5" y="495.5" width="3" height="9" fill="#b0607e" stroke="#6a2848"/>
<rect x="435.5" y="495.5" width="3" height="10" fill="#b0607e" stroke="#6a2848"/>
<rect x="438.5" y="495.5" width="3" height="12" fill="#b0607e" stroke="#6a2848"/>
<rect x="442.5" y="495.5" width="3" height="13" fill="#b0607e" stroke="#6a2848"/>
<rect x="445.5" y="495.5" width="3" height="13" fill="#b0607e" stroke="#6a2848"/>
<rect x="448.5" y="495.5" width="3" height="12" fill="#b0607e" stroke="#6a2848"/>
<rect x="452.5" y="495.5" width="3" height="10" fill="#b0607e" stroke="#6a2848"/>
<rect x="455.5" y="495.5" width="3" height="8" fill="#b0607e" stroke="#6a2848"/>
<rect x="459.5" y="495.5" width="3" height="5" fill="#b0607e" stroke="#6a2848"/>
<rect x="462.5" y="495.5" width="3" height="3" fill="#b0607e" stroke="#6a2848"/>
<rect x="465.5" y="495.5" width="3" height="1" fill="#b0607e" stroke="#6a2848"/>
<rect x="469.5" y="495.5" width="3" height="2" fill="#b0607e" stroke="#6a2848"/>
<rect x="472.5" y="495.5" width="3" height="3" fill="#b0607e" stroke="#6a2848"/>
<rect x="476.5" y="495.5" width="3" height="3" fill="#b0607e" stroke="#6a2848"/>
<rect x="479.5" y="495.5" width="3" height="2" fill="#b0607e" stroke="#6a2848"/>
<rect x="482.5" y="495.5" width="3" height="3" fill="#b0607e" stroke="#6a2848"/>
<rect x="486.5" y="495.5" width="3" height="3" fill="#b0607e" stroke="#6a2848"/>
<rect x="489.5" y="495.5" width="3" height="3" fill="#b0607e" stroke="#6a2848"/>
<rect x="493.5" y="495.5" width="3" height="3" fill="#b0607e" stroke="#6a2848"/>
<rect x="496.5" y="495.5" width="3" height="4" fill="#b0607e" stroke="#6a2848"/>
<rect x="499.5" y="495.5" width="3" height="5" fill="#b0607e" stroke="#6a2848"/>
<rect x="503.5" y="495.5" width="3" height="6" fill="#b0607e" stroke="#6a2848"/>
<rect x="506.5" y="495.5" width="3" height="6" fill="#b0607e" stroke="#6a2848"/>
<rect x="510.5" y="495.5" width="3" height="5" fill="#b0607e" stroke="#6a2848"/>
<rect x="513.5" y="495.5" width="3" height="5" fill="#b0607e" stroke="#6a2848"/>
<rect x="516.5" y="495.5" width="3" height="4" fill="#b0607e" stroke="#6a2848"/>
<rect x="520.5" y="495.5" width="3" height="4" fill="#b0607e" stroke="#6a2848"/>
<rect x="523.5" y="495.5" width="3" height="4" fill="#b0607e" stroke="#6a2848"/>
<rect x="527.5" y="495.5" width="3" height="3" fill="#b0607e" stroke="#6a2848"/>
<rect x="530.5" y="495.5" width="3" height="2" fill="#b0607e" stroke="#6a2848"/>
<rect x="533.5" y="495.5" width="3" height="1" fill="#b0607e" stroke="#6a2848"/>
<rect x="537.5" y="495.5" width="3" height="1" fill="#b0607e" stroke="#6a2848"/>
<rect x="540.5" y="495.5" width="3" height="1" fill="#b0607e" stroke="#6a2848"/>
<rect x="544.5" y="495.5" width="3" height="1" fill="#b0607e" stroke="#6a2848"/>
<rect x="550.5" y="493.5" width="3" height="2" fill="#a8a048" stroke="#5a5a20"/>
<rect x="554.5" y="493.5" width="3" height="2" fill="#a8a048" stroke="#5a5a20"/>
<rect x="557.5" y="492.5" width="3" height="3" fill="#a8a048" stroke="#5a5a20"/>
<rect x="561.5" y="493.5" width="3" height="2" fill="#a8a048" stroke="#5a5a20"/>
<rect x="564.5" y="493.5" width="3" height="2" fill="#a8a048" stroke="#5a5a20"/>
<rect x="567.5" y="493.5" width="3" height="2" fill="#a8a048" stroke="#5a5a20"/>
<rect x="571.5" y="493.5" width="3" height="2" fill="#a8a048" stroke="#5a5a20"/>
<rect x="574.5" y="493.5" width="3" height="2" fill="#a8a048" stroke="#5a5a20"/>
<rect x="578.5" y="493.5" width="3" height="2" fill="#a8a048" stroke="#5a5a20"/>
<rect x="581.5" y="493.5" width="3" height="2" fill="#a8a048" stroke="#5a5a20"/>
<rect x="584.5" y="493.5" width="3" height="2" fill="#a8a048" stroke="#5a5a20"/>
<rect x="588.5" y="492.5" width="3" height="3" fill="#a8a048" stroke="#5a5a20"/>
<rect x="591.5" y="493.5" width="3" height="2" fill="#a8a048" stroke="#5a5a20"/>
<rect x="595.5" y="493.5" width="3" height="2" fill="#a8a048" stroke="#5a5a20"/>
<rect x="598.5" y="493.5" width="3" height="2" fill="#a8a048" stroke="#5a5a20"/>
<rect x="601.5" y="493.5" width="3" height="2" fill="#a8a048" stroke="#5a5a20"/>
<rect x="605.5" y="493.5" width="3" height="2" fill="#a8a048" stroke="#5a5a20"/>
<rect x="608.5" y="492.5" width="3" height="3" fill="#a8a048" stroke="#5a5a20"/>
<rect x="612.5" y="491.5" width="3" height="4" fill="#a8a048" stroke="#5a5a20"/>
<rect x="615.5" y="491.5" width="3" height="4" fill="#a8a048" stroke="#5a5a20"/>
<rect x="618.5" y="492.5" width="3" height="3" fill="#a8a048" stroke="#5a5a20"/>
<rect x="622.5" y="493.5" width="3" height="2" fill="#a8a048" stroke="#5a5a20"/>
<rect x="625.5" y="493.5" width="3" height="2" fill="#a8a048" stroke="#5a5a20"/>
<rect x="629.5" y="493.5" width="3" height="2" fill="#a8a048" stroke="#5a5a20"/>
<rect x="632.5" y="492.5" width="3" height="3" fill="#a8a048" stroke="#5a5a20"/>
<rect x="635.5" y="491.5" width="3" height="4" fill="#a8a048" stroke="#5a5a20"/>
<rect x="639.5" y="490.5" width="3" height="5" fill="#a8a048" stroke="#5a5a20"/>
<rect x="642.5" y="491.5" width="3" height="4" fill="#a8a048" stroke="#5a5a20"/>
<rect x="646.5" y="493.5" width="3" height="2" fill="#a8a048" stroke="#5a5a20"/>
<rect x="649.5" y="494.5" width="3" height="1" fill="#a8a048" stroke="#5a5a20"/>
<rect x="659.5" y="495.5" width="3" height="1" fill="#b0607e" stroke="#6a2848"/>
<rect x="663.5" y="495.5" width="3" height="1" fill="#b0607e" stroke="#6a2848"/>
<rect x="666.5" y="495.5" width="3" height="2" fill="#b0607e" stroke="#6a2848"/>
<rect x="669.5" y="495.5" width="3" height="3" fill="#b0607e" stroke="#6a2848"/>
<rect x="673.5" y="495.5" width="3" height="3" fill="#b0607e" stroke="#6a2848"/>
<rect x="676.5" y="495.5" width="3" height="3" fill="#b0607e" stroke="#6a2848"/>
<rect x="680.5" y="495.5" width="3" height="4" fill="#b0607e" stroke="#6a2848"/>
<rect x="683.5" y="495.5" width="3" height="4" fill="#b0607e" stroke="#6a2848"/>
<rect x="686.5" y="495.5" width="3" height="3" fill="#b0607e" stroke="#6a2848"/>
<rect x="690.5" y="495.5" width="3" height="3" fill="#b0607e" stroke="#6a2848"/>
<rect x="693.5" y="495.5" width="3" height="2" fill="#b0607e" stroke="#6a2848"/>
<rect x="700.5" y="494.5" width="3" height="1" fill="#a8a048" stroke="#5a5a20"/>
<rect x="703.5" y="493.5" width="3" height="2" fill="#a8a048" stroke="#5a5a20"/>
<rect x="707.5" y="494.5" width="3" height="1" fill="#a8a048" stroke="#5a5a20"/>
<rect x="710.5" y="494.5" width="3" height="1" fill="#a8a048" stroke="#5a5a20"/>
<rect x="714.5" y="494.5" width="3" height="1" fill="#a8a048" stroke="#5a5a20"/>
<rect x="717.5" y="494.5" width="3" height="1" fill="#a8a048" stroke="#5a5a20"/>
<rect x="720.5" y="494.5" width="3" height="1" fill="#a8a048" stroke="#5a5a20"/>
<rect x="724.5" y="494.5" width="3" height="1" fill="#a8a048" stroke="#5a5a20"/>
<rect x="727.5" y="494.5" width="3" height="1" fill="#a8a048" stroke="#5a5a20"/>
<rect x="731.5" y="494.5" width="3" height="1" fill="#a8a048" stroke="#5a5a20"/>
<rect x="734.5" y="494.5" width="3" height="1" fill="#a8a048" stroke="#5a5a20"/>
<rect x="737.5" y="494.5" width="3" height="1" fill="#a8a048" stroke="#5a5a20"/>
<rect x="741.5" y="494.5" width="3" height="1" fill="#a8a048" stroke="#5a5a20"/>
<rect x="744.5" y="494.5" width="3" height="1" fill="#a8a048" stroke="#5a5a20"/>
<rect x="785.5" y="495.5" width="3" height="1" fill="#b0607e" stroke="#6a2848"/>
</g>
<polyline points="40.0,465.2 49.4,468.7 58.8,475.8 68.2,479.3 77.6,482.8 87.1,485.2 96.5,488.2 105.9,491.1 115.3,494.1 122.4,497.6 129.4,501.6 136.5,505.6 143.5,508.7 150.6,511.1 156.5,511.1 162.4,507.5 168.2,501.6 174.1,493.4 181.2,484.0 188.2,479.3 195.3,476.2 202.4,475.1 209.4,476.9 216.5,481.6 223.5,487.5 230.0,492.2 237.1,498.1 244.1,506.4 251.2,513.4 258.2,516.5 265.3,518.8 272.4,521.6 279.4,526.4 286.5,531.1 293.5,534.6 300.6,536.2 307.6,536.9 314.7,536.5 321.8,535.8 328.8,534.6 335.9,532.9 342.9,530.6 350.0,526.8 357.1,522.8 364.1,516.9 371.2,509.9 378.2,501.6 385.3,489.9 392.4,476.9 398.2,469.4 404.1,468.0 411.2,468.0 418.2,468.2 420.0,468.7 427.1,471.8 434.1,475.8 441.2,481.6 448.2,488.7 455.3,493.4 462.4,495.8 469.4,496.9 476.5,498.1 483.5,499.3 490.6,501.2 495.3,501.6 502.4,504.7 509.4,507.5 516.5,510.4 523.5,512.7 530.6,514.1 537.6,514.1 544.7,514.1 551.8,513.9 558.8,512.9 565.9,512.2 572.9,511.1 580.0,510.4 587.1,509.9 594.1,508.2 601.2,507.1 608.2,505.6 610.0,506.4 617.1,504.7 624.1,502.8 631.2,501.6 638.2,499.8 645.3,498.1 652.4,497.2 659.4,497.6 666.5,498.8 673.5,500.0 680.6,501.2 687.6,502.8 694.7,504.0 701.8,504.2 708.8,503.3 718.2,502.8 727.6,501.9 737.1,501.6 746.5,500.9 755.9,500.7 765.3,500.9 774.7,501.2 784.1,501.4 793.5,501.9 800.1,502.1" fill="none" stroke="#8a2a44" stroke-width="1.1" stroke-linejoin="round"/>
<polyline points="40.0,470.4 47.1,474.6 52.9,480.5 58.8,482.8 64.7,484.5 70.6,485.9 77.6,487.1 85.9,487.5 92.9,491.1 100.0,494.6 107.1,496.2 114.1,497.6 121.2,498.6 127.1,500.5 132.9,505.6 138.8,512.2 143.5,516.5 147.8,517.4 152.9,514.6 157.6,507.5 163.5,496.9 169.4,484.0 175.3,474.1 181.2,468.7 185.9,468.2 191.8,470.4 197.6,471.8 204.7,474.6 211.8,482.8 218.8,493.4 225.9,501.6 230.0,505.6 234.7,509.4 239.4,513.4 244.1,518.1 250.0,521.2 255.9,522.1 261.8,522.1 267.6,523.5 272.4,527.5 277.1,532.9 282.9,536.9 288.8,538.6 293.5,540.0 298.2,540.9 302.9,539.3 307.6,537.4 313.5,536.5 319.4,534.6 324.1,532.9 331.2,531.5 335.9,529.2 341.8,526.8 347.6,523.5 352.4,519.3 357.1,513.4 362.9,506.4 368.8,499.3 373.5,491.1 378.2,482.8 382.9,471.1 387.6,462.8 392.4,451.5 397.1,454.6 401.8,461.6 406.5,466.4 411.2,469.4 415.9,468.7 420.0,472.2 424.7,475.8 430.6,481.6 436.5,487.5 442.4,495.8 447.1,500.5 451.8,502.8 456.5,501.6 461.2,499.3 467.1,497.6 472.9,500.0 477.6,501.2 482.4,501.2 487.1,503.5 492.9,504.2 497.6,507.1 502.4,510.4 507.1,512.7 512.9,513.9 518.8,515.3 523.5,517.4 528.2,516.5 532.9,515.3 540.0,515.1 547.1,514.6 551.8,512.2 558.8,510.4 565.9,510.4 572.9,509.4 580.0,508.7 584.7,508.0 589.4,506.4 595.3,506.4 601.2,505.2 605.9,504.7 610.0,502.8 615.9,501.2 622.9,500.9 630.0,500.0 634.7,496.9 639.4,494.6 644.1,494.6 650.0,496.2 657.1,497.6 662.9,499.3 668.8,501.6 673.5,502.8 679.4,504.7 685.3,505.9 691.2,506.4 695.9,505.6 699.4,503.3 704.1,502.1 713.5,502.1 722.9,501.2 732.4,501.2 741.8,500.5 751.2,500.5 760.6,500.5 770.0,501.2 779.4,501.2 786.5,502.1 800.1,502.1" fill="none" stroke="#1c3050" stroke-width="1.8" stroke-linejoin="round"/>
</g>
<rect x="41" y="549" width="766" height="103" fill="#fff"/>
<g clip-path="url(#cs)" shape-rendering="crispEdges">
<line x1="41" x2="807" y1="645.5" y2="645.5" stroke="#d6d6e3"/>
<line x1="41" x2="807" y1="636.5" y2="636.5" stroke="#d6d6e3"/>
<line x1="41" x2="807" y1="627.5" y2="627.5" stroke="#d6d6e3"/>
<line x1="41" x2="807" y1="618.5" y2="618.5" stroke="#d6d6e3"/>
<line x1="41" x2="807" y1="609.5" y2="609.5" stroke="#d6d6e3"/>
<line x1="41" x2="807" y1="600.5" y2="600.5" stroke="#d6d6e3"/>
<line x1="41" x2="807" y1="591.5" y2="591.5" stroke="#d6d6e3"/>
<line x1="41" x2="807" y1="582.5" y2="582.5" stroke="#d6d6e3"/>
<line x1="41" x2="807" y1="573.5" y2="573.5" stroke="#d6d6e3"/>
<line x1="41" x2="807" y1="564.5" y2="564.5" stroke="#d6d6e3"/>
<line x1="41" x2="807" y1="555.5" y2="555.5" stroke="#d6d6e3"/>
<line x1="45.5" x2="45.5" y1="549" y2="652" stroke="#d6d6e3"/>
<line x1="58.5" x2="58.5" y1="549" y2="652" stroke="#d6d6e3"/>
<line x1="75.5" x2="75.5" y1="549" y2="652" stroke="#d6d6e3"/>
<line x1="89.5" x2="89.5" y1="549" y2="652" stroke="#d6d6e3"/>
<line x1="106.5" x2="106.5" y1="549" y2="652" stroke="#d6d6e3"/>
<line x1="123.5" x2="123.5" y1="549" y2="652" stroke="#d6d6e3"/>
<line x1="140.5" x2="140.5" y1="549" y2="652" stroke="#d6d6e3"/>
<line x1="157.5" x2="157.5" y1="549" y2="652" stroke="#d6d6e3"/>
<line x1="171.5" x2="171.5" y1="549" y2="652" stroke="#d6d6e3"/>
<line x1="188.5" x2="188.5" y1="549" y2="652" stroke="#d6d6e3"/>
<line x1="205.5" x2="205.5" y1="549" y2="652" stroke="#d6d6e3"/>
<line x1="222.5" x2="222.5" y1="549" y2="652" stroke="#d6d6e3"/>
<line x1="239.5" x2="239.5" y1="549" y2="652" stroke="#d6d6e3"/>
<line x1="256.5" x2="256.5" y1="549" y2="652" stroke="#d6d6e3"/>
<line x1="273.5" x2="273.5" y1="549" y2="652" stroke="#d6d6e3"/>
<line x1="286.5" x2="286.5" y1="549" y2="652" stroke="#d6d6e3"/>
<line x1="303.5" x2="303.5" y1="549" y2="652" stroke="#d6d6e3"/>
<line x1="320.5" x2="320.5" y1="549" y2="652" stroke="#d6d6e3"/>
<line x1="337.5" x2="337.5" y1="549" y2="652" stroke="#d6d6e3"/>
<line x1="354.5" x2="354.5" y1="549" y2="652" stroke="#d6d6e3"/>
<line x1="371.5" x2="371.5" y1="549" y2="652" stroke="#d6d6e3"/>
<line x1="388.5" x2="388.5" y1="549" y2="652" stroke="#d6d6e3"/>
<line x1="402.5" x2="402.5" y1="549" y2="652" stroke="#d6d6e3"/>
<line x1="419.5" x2="419.5" y1="549" y2="652" stroke="#d6d6e3"/>
<line x1="436.5" x2="436.5" y1="549" y2="652" stroke="#d6d6e3"/>
<line x1="453.5" x2="453.5" y1="549" y2="652" stroke="#d6d6e3"/>
<line x1="470.5" x2="470.5" y1="549" y2="652" stroke="#d6d6e3"/>
<line x1="483.5" x2="483.5" y1="549" y2="652" stroke="#d6d6e3"/>
<line x1="500.5" x2="500.5" y1="549" y2="652" stroke="#d6d6e3"/>
<line x1="517.5" x2="517.5" y1="549" y2="652" stroke="#d6d6e3"/>
<line x1="534.5" x2="534.5" y1="549" y2="652" stroke="#d6d6e3"/>
<line x1="551.5" x2="551.5" y1="549" y2="652" stroke="#d6d6e3"/>
<line x1="568.5" x2="568.5" y1="549" y2="652" stroke="#d6d6e3"/>
<line x1="585.5" x2="585.5" y1="549" y2="652" stroke="#d6d6e3"/>
<line x1="602.5" x2="602.5" y1="549" y2="652" stroke="#d6d6e3"/>
<line x1="619.5" x2="619.5" y1="549" y2="652" stroke="#d6d6e3"/>
<line x1="633.5" x2="633.5" y1="549" y2="652" stroke="#d6d6e3"/>
<line x1="650.5" x2="650.5" y1="549" y2="652" stroke="#d6d6e3"/>
<line x1="667.5" x2="667.5" y1="549" y2="652" stroke="#d6d6e3"/>
<line x1="684.5" x2="684.5" y1="549" y2="652" stroke="#d6d6e3"/>
<line x1="701.5" x2="701.5" y1="549" y2="652" stroke="#d6d6e3"/>
<line x1="718.5" x2="718.5" y1="549" y2="652" stroke="#d6d6e3"/>
<line x1="735.5" x2="735.5" y1="549" y2="652" stroke="#d6d6e3"/>
<line x1="752.5" x2="752.5" y1="549" y2="652" stroke="#d6d6e3"/>
<line x1="769.5" x2="769.5" y1="549" y2="652" stroke="#d6d6e3"/>
<line x1="786.5" x2="786.5" y1="549" y2="652" stroke="#d6d6e3"/>
<line x1="113.5" x2="113.5" y1="549" y2="652" stroke="#9aa2bc"/>
<line x1="177.5" x2="177.5" y1="549" y2="652" stroke="#9aa2bc"/>
<line x1="256.5" x2="256.5" y1="549" y2="652" stroke="#9aa2bc"/>
<line x1="320.5" x2="320.5" y1="549" y2="652" stroke="#9aa2bc"/>
<line x1="395.5" x2="395.5" y1="549" y2="652" stroke="#9aa2bc"/>
<line x1="470.5" x2="470.5" y1="549" y2="652" stroke="#9aa2bc"/>
<line x1="538.5" x2="538.5" y1="549" y2="652" stroke="#9aa2bc"/>
<line x1="616.5" x2="616.5" y1="549" y2="652" stroke="#9aa2bc"/>
<line x1="684.5" x2="684.5" y1="549" y2="652" stroke="#9aa2bc"/>
<line x1="759.5" x2="759.5" y1="549" y2="652" stroke="#9aa2bc"/>
</g>
<g clip-path="url(#cs)">
<line x1="41" x2="807" y1="573.5" y2="573.5" stroke="#000" stroke-width="1" shape-rendering="crispEdges"/>
<line x1="41" x2="807" y1="627.5" y2="627.5" stroke="#000" stroke-width="1" shape-rendering="crispEdges"/>
<line x1="41" x2="807" y1="600.5" y2="600.5" stroke="#000" stroke-width="1" stroke-dasharray="7 3 2 3" shape-rendering="crispEdges"/>
<polyline points="40.0,603.3 44.7,608.0 49.4,608.7 54.1,609.6 58.8,613.9 63.5,619.8 68.2,622.1 72.9,620.9 77.6,621.4 82.4,621.4 87.1,618.6 91.8,620.9 96.5,628.0 101.2,635.1 105.9,636.2 110.6,632.7 115.3,632.2 120.0,629.2 124.7,618.6 128.2,613.4 130.6,613.9 134.1,623.3 138.4,631.5 141.2,631.5 144.7,622.1 148.2,611.5 152.9,598.6 157.6,585.6 162.4,573.9 167.1,565.6 170.6,563.3 174.1,566.8 178.8,569.6 183.5,568.7 188.2,569.6 192.9,576.2 197.6,582.1 202.4,585.6 207.1,595.1 211.8,611.5 216.5,628.0 221.2,638.6 225.9,640.9 230.0,640.9 237.1,641.6 244.1,642.1 251.2,642.6 255.9,640.9 260.6,639.3 265.3,638.1 270.0,637.9 274.7,636.7 279.4,636.9 284.1,635.1 288.8,633.2 293.5,635.1 298.2,638.6 302.9,639.3 307.6,636.9 312.4,636.2 317.1,638.6 321.8,639.3 326.5,637.9 331.2,637.9 335.9,640.5 340.6,641.6 345.3,640.9 348.8,637.4 352.4,620.9 355.9,602.1 359.4,583.3 362.9,571.5 367.6,562.1 371.2,558.6 375.9,559.3 380.6,563.3 385.3,566.8 390.0,566.8 394.7,568.0 399.4,575.1 402.9,590.4 406.5,603.3 411.2,611.1 417.1,611.5 420.0,611.5 424.7,616.2 429.4,624.5 434.1,631.5 438.8,636.2 443.5,638.6 448.2,638.6 452.9,636.2 457.6,628.0 462.4,617.4 467.1,604.5 470.6,596.2 474.1,596.2 477.6,603.3 481.2,609.2 485.9,609.6 489.4,611.5 494.1,617.4 498.8,626.8 503.5,635.1 508.2,638.6 512.9,638.6 517.6,636.9 522.4,636.9 527.1,636.9 531.8,633.2 536.5,626.8 541.2,628.5 545.9,630.8 549.4,631.5 552.9,628.0 557.6,616.2 561.2,611.5 563.5,612.7 567.1,620.9 571.8,628.0 576.5,632.7 581.2,636.2 585.9,633.9 589.4,626.8 592.9,619.8 596.5,618.1 600.0,624.5 603.5,625.6 607.1,620.9 610.0,612.7 613.5,602.1 617.1,595.1 620.6,593.9 624.1,596.2 628.8,600.9 632.4,598.6 637.1,593.9 640.6,585.2 644.1,584.5 647.6,592.7 651.2,612.7 654.7,626.8 658.2,635.5 662.9,640.2 667.6,639.3 672.4,636.9 677.1,634.6 681.8,631.5 686.5,633.9 691.2,636.2 695.9,633.2 699.4,623.3 702.9,610.4 706.5,602.1 711.2,602.1 714.7,608.0 718.2,612.0 722.9,614.4 727.6,616.2 732.4,616.9 737.1,618.6 741.8,624.5 746.5,632.7 751.2,637.4 755.9,636.2 760.6,634.6 765.3,636.9 770.0,639.3 774.7,636.2 779.4,633.9 784.1,637.4 788.8,639.8 793.5,638.1 797.1,633.9 800.1,630.4" fill="none" stroke="#8a2a44" stroke-width="1.1" stroke-linejoin="round"/>
<polyline points="40.0,609.2 45.2,613.9 48.2,604.5 51.8,609.6 55.3,608.7 58.8,620.9 63.5,621.4 69.4,622.1 72.2,617.4 75.3,624.5 80.0,620.5 83.5,619.8 87.1,617.4 90.6,619.8 94.1,628.0 100.0,638.6 103.5,636.9 107.1,629.6 110.6,631.5 114.1,634.6 118.8,630.4 121.2,618.6 124.2,609.6 127.1,609.6 130.6,620.9 134.1,632.7 137.6,634.6 140.7,626.8 144.0,611.1 147.5,604.5 150.6,591.5 154.1,585.6 157.6,573.9 161.2,566.8 164.7,561.6 168.2,563.3 171.8,566.8 174.8,570.4 178.8,569.2 181.2,568.0 184.7,569.6 188.2,570.4 191.8,580.9 195.3,583.3 201.2,585.2 204.7,592.7 208.2,609.2 211.8,625.6 215.3,633.9 218.8,640.9 222.4,642.8 227.1,640.5 230.0,641.6 234.7,641.6 239.4,642.1 244.1,641.4 248.8,642.1 252.4,642.1 257.1,638.6 262.9,637.4 266.5,639.3 270.0,636.2 275.9,636.2 280.6,636.9 286.5,631.5 292.4,636.2 298.2,640.9 302.9,638.6 307.6,634.6 312.4,637.4 317.5,640.9 321.8,638.1 326.5,637.4 331.2,638.6 335.9,641.6 340.6,641.4 344.1,641.6 347.6,636.2 350.0,623.3 352.8,602.1 355.9,583.3 358.9,571.5 362.9,564.5 368.8,557.4 372.4,558.6 375.9,561.6 378.7,562.1 382.5,569.6 385.3,566.8 388.4,570.8 392.4,561.6 394.7,571.5 398.9,585.6 402.5,608.0 405.3,610.4 410.0,613.2 415.9,611.5 420.0,613.4 423.5,616.2 429.4,629.9 434.1,633.9 438.8,638.6 443.5,639.8 448.2,637.9 451.8,635.1 455.3,628.0 460.0,616.2 464.7,600.9 468.2,593.2 470.6,592.2 472.9,598.6 477.6,611.1 481.2,611.1 484.7,609.6 488.2,611.1 492.9,619.8 497.6,630.4 501.2,635.1 504.7,639.8 508.2,638.1 511.8,638.1 516.5,635.8 520.0,636.2 524.7,637.9 528.2,635.5 531.8,630.8 535.3,625.2 538.8,626.8 542.4,629.9 545.9,631.5 548.9,631.5 551.8,626.8 555.3,610.4 558.8,606.8 561.2,615.1 564.7,623.3 569.4,629.6 572.9,630.4 576.5,634.6 581.2,636.9 584.7,635.1 587.5,626.8 589.9,616.7 594.1,619.8 597.6,624.5 600.0,629.9 603.5,625.6 607.1,613.9 610.0,602.6 612.8,592.7 615.9,589.9 619.4,597.4 622.9,597.9 626.5,600.2 630.5,603.3 633.5,591.5 637.1,589.9 640.6,573.9 643.4,585.6 646.5,602.1 650.0,626.8 653.5,633.9 657.1,638.6 661.8,640.9 666.5,637.9 671.2,636.2 674.7,633.2 678.2,631.5 681.3,630.4 685.3,635.1 688.8,638.6 692.4,633.9 695.2,630.4 698.2,616.2 701.8,602.1 705.3,594.4 708.8,603.3 712.4,608.7 715.9,613.4 720.6,614.6 725.3,616.2 730.0,616.9 733.5,617.9 737.1,620.9 740.6,628.0 744.1,634.6 747.6,638.6 750.7,638.1 753.5,635.1 758.2,633.9 761.8,636.2 765.3,639.3 769.5,640.2 773.5,632.2 778.2,634.6 781.3,637.4 784.1,641.4 787.6,639.8 791.2,636.2 793.5,635.1 797.1,629.2 800.1,625.2" fill="none" stroke="#1c3050" stroke-width="1.8" stroke-linejoin="round"/>
</g>
<g shape-rendering="crispEdges" stroke="#0c1440">
<line x1="40" x2="807" y1="29.5" y2="29.5"/>
<line x1="40" x2="807" y1="133.5" y2="133.5"/>
<line x1="40" x2="807" y1="548.5" y2="548.5"/>
<line x1="40.5" x2="40.5" y1="29" y2="430"/>
<line x1="806.5" x2="806.5" y1="29" y2="430"/>
<line x1="40.5" x2="40.5" y1="444" y2="653"/>
<line x1="806.5" x2="806.5" y1="444" y2="653"/>
</g>
<g shape-rendering="crispEdges" stroke="#0c1440" stroke-dasharray="1.7 1.7">
<line x1="41" x2="807" y1="429.5" y2="429.5"/>
<line x1="41" x2="807" y1="444.5" y2="444.5"/>
<line x1="41" x2="807" y1="652.5" y2="652.5"/>
</g>
<g shape-rendering="crispEdges" stroke="#0c1440" stroke-dasharray="1 1">
</g>
<g shape-rendering="crispEdges" fill="#0c1440">
<rect x="807" y="126" width="1" height="1"/>
<rect x="807" y="121" width="1" height="1"/>
<rect x="807" y="117" width="2" height="1"/>
<rect x="807" y="112" width="1" height="1"/>
<rect x="807" y="108" width="1" height="1"/>
<rect x="807" y="103" width="1" height="1"/>
<rect x="807" y="99" width="2" height="1"/>
<rect x="807" y="94" width="1" height="1"/>
<rect x="807" y="90" width="1" height="1"/>
<rect x="807" y="85" width="1" height="1"/>
<rect x="807" y="81" width="2" height="1"/>
<rect x="807" y="76" width="1" height="1"/>
<rect x="807" y="72" width="1" height="1"/>
<rect x="807" y="67" width="1" height="1"/>
<rect x="807" y="63" width="2" height="1"/>
<rect x="807" y="58" width="1" height="1"/>
<rect x="807" y="54" width="1" height="1"/>
<rect x="807" y="49" width="1" height="1"/>
<rect x="807" y="45" width="2" height="1"/>
<rect x="807" y="40" width="1" height="1"/>
<rect x="807" y="36" width="1" height="1"/>
<rect x="807" y="416" width="2" height="1"/>
<rect x="807" y="400" width="1" height="1"/>
<rect x="807" y="386" width="1" height="1"/>
<rect x="807" y="373" width="1" height="1"/>
<rect x="807" y="363" width="1" height="1"/>
<rect x="807" y="353" width="2" height="1"/>
<rect x="807" y="290" width="2" height="1"/>
<rect x="807" y="253" width="2" height="1"/>
<rect x="807" y="227" width="2" height="1"/>
<rect x="807" y="207" width="2" height="1"/>
<rect x="807" y="190" width="2" height="1"/>
<rect x="807" y="176" width="2" height="1"/>
<rect x="807" y="164" width="2" height="1"/>
<rect x="807" y="153" width="2" height="1"/>
<rect x="807" y="144" width="2" height="1"/>
<rect x="807" y="135" width="1" height="1"/>
<rect x="807" y="316" width="1" height="1"/>
<rect x="807" y="290" width="1" height="1"/>
<rect x="807" y="270" width="1" height="1"/>
<rect x="807" y="545" width="1" height="1"/>
<rect x="807" y="541" width="1" height="1"/>
<rect x="807" y="537" width="1" height="1"/>
<rect x="807" y="533" width="2" height="1"/>
<rect x="807" y="529" width="1" height="1"/>
<rect x="807" y="526" width="1" height="1"/>
<rect x="807" y="522" width="1" height="1"/>
<rect x="807" y="518" width="1" height="1"/>
<rect x="807" y="514" width="2" height="1"/>
<rect x="807" y="510" width="1" height="1"/>
<rect x="807" y="506" width="1" height="1"/>
<rect x="807" y="503" width="1" height="1"/>
<rect x="807" y="499" width="1" height="1"/>
<rect x="807" y="495" width="2" height="1"/>
<rect x="807" y="491" width="1" height="1"/>
<rect x="807" y="487" width="1" height="1"/>
<rect x="807" y="483" width="1" height="1"/>
<rect x="807" y="479" width="1" height="1"/>
<rect x="807" y="476" width="2" height="1"/>
<rect x="807" y="472" width="1" height="1"/>
<rect x="807" y="468" width="1" height="1"/>
<rect x="807" y="464" width="1" height="1"/>
<rect x="807" y="460" width="1" height="1"/>
<rect x="807" y="456" width="2" height="1"/>
<rect x="807" y="452" width="1" height="1"/>
<rect x="807" y="449" width="1" height="1"/>
<rect x="807" y="645" width="1" height="1"/>
<rect x="807" y="640" width="1" height="1"/>
<rect x="807" y="636" width="1" height="1"/>
<rect x="807" y="631" width="1" height="1"/>
<rect x="807" y="627" width="2" height="1"/>
<rect x="807" y="622" width="1" height="1"/>
<rect x="807" y="618" width="1" height="1"/>
<rect x="807" y="613" width="1" height="1"/>
<rect x="807" y="609" width="1" height="1"/>
<rect x="807" y="604" width="1" height="1"/>
<rect x="807" y="600" width="2" height="1"/>
<rect x="807" y="595" width="1" height="1"/>
<rect x="807" y="591" width="1" height="1"/>
<rect x="807" y="586" width="1" height="1"/>
<rect x="807" y="582" width="1" height="1"/>
<rect x="807" y="577" width="1" height="1"/>
<rect x="807" y="573" width="2" height="1"/>
<rect x="807" y="568" width="1" height="1"/>
<rect x="807" y="564" width="1" height="1"/>
<rect x="807" y="559" width="1" height="1"/>
<rect x="807" y="555" width="1" height="1"/>
</g>
<text x="40.8" y="15.3" font-size="14" fill="#ffffff" font-family="Liberation Sans, Arial, sans-serif" textLength="33.8" lengthAdjust="spacingAndGlyphs" font-weight="bold">CBAY</text>
<text x="78.5" y="15.3" font-size="11.5" fill="#ffffff" font-family="Liberation Sans, Arial, sans-serif" textLength="81.7" lengthAdjust="spacingAndGlyphs">(Cal-Bay Intl Inc.)</text>
<text x="165.8" y="15.3" font-size="10" fill="#ffffff" font-family="Liberation Sans, Arial, sans-serif" textLength="50.2" lengthAdjust="spacing">Nasdaq BB</text>
<text x="41" y="26.6" font-size="10" fill="#ffffff" font-family="Liberation Sans, Arial, sans-serif" textLength="58" lengthAdjust="spacing">17-Nov-2006</text>
<text x="400" y="26.5" font-size="11" fill="#ffffff" font-family="Liberation Sans, Arial, sans-serif" textLength="28.3" lengthAdjust="spacingAndGlyphs" font-weight="bold">Open</text>
<text x="431.5" y="26.5" font-size="11" fill="#ffffff" font-family="Liberation Sans, Arial, sans-serif" textLength="20.2" lengthAdjust="spacingAndGlyphs">0.06</text>
<text x="458.6" y="26.5" font-size="11" fill="#ffffff" font-family="Liberation Sans, Arial, sans-serif" textLength="24.5" lengthAdjust="spacingAndGlyphs" font-weight="bold">High</text>
<text x="485.8" y="26.5" font-size="11" fill="#ffffff" font-family="Liberation Sans, Arial, sans-serif" textLength="20.2" lengthAdjust="spacingAndGlyphs">0.07</text>
<text x="512.7" y="26.5" font-size="11" fill="#ffffff" font-family="Liberation Sans, Arial, sans-serif" textLength="23" lengthAdjust="spacingAndGlyphs" font-weight="bold">Low</text>
<text x="539.9" y="26.5" font-size="11" fill="#ffffff" font-family="Liberation Sans, Arial, sans-serif" textLength="20.2" lengthAdjust="spacingAndGlyphs">0.06</text>
<text x="567" y="26.5" font-size="11" fill="#ffffff" font-family="Liberation Sans, Arial, sans-serif" textLength="31.5" lengthAdjust="spacingAndGlyphs" font-weight="bold">Close</text>
<text x="602.2" y="26.5" font-size="11" fill="#ffffff" font-family="Liberation Sans, Arial, sans-serif" textLength="20.2" lengthAdjust="spacingAndGlyphs">0.06</text>
<text x="629.2" y="26.5" font-size="11" fill="#ffffff" font-family="Liberation Sans, Arial, sans-serif" textLength="42" lengthAdjust="spacingAndGlyphs" font-weight="bold">Volume</text>
<text x="675" y="26.5" font-size="11" fill="#ffffff" font-family="Liberation Sans, Arial, sans-serif" textLength="23" lengthAdjust="spacingAndGlyphs">5.4M</text>
<text x="704.5" y="26.5" font-size="11" fill="#ffffff" font-family="Liberation Sans, Arial, sans-serif" textLength="21.5" lengthAdjust="spacingAndGlyphs" font-weight="bold">Chg</text>
<text x="730" y="26.5" font-size="11" fill="#ffffff" font-family="Liberation Sans, Arial, sans-serif" textLength="66.7" lengthAdjust="spacingAndGlyphs">-0.00 (-3.23%)</text>
<polygon points="799.3,21.8 806.7,21.8 803,26.2" fill="#9c1818"/>
<text x="717.5" y="13.5" font-size="11" fill="#b8c4d8" font-family="Liberation Sans, Arial, sans-serif" textLength="88.5" lengthAdjust="spacingAndGlyphs">© StockCharts.com</text>
<text x="809.8" y="49.599999999999994" font-size="10" fill="#ffffff" font-family="Liberation Sans, Arial, sans-serif" textLength="11.4" lengthAdjust="spacingAndGlyphs">90</text>
<text x="809.8" y="67.6" font-size="10" fill="#ffffff" font-family="Liberation Sans, Arial, sans-serif" textLength="11.4" lengthAdjust="spacingAndGlyphs">70</text>
<text x="809.8" y="85.6" font-size="10" fill="#ffffff" font-family="Liberation Sans, Arial, sans-serif" textLength="11.4" lengthAdjust="spacingAndGlyphs">50</text>
<text x="809.8" y="103.6" font-size="10" fill="#ffffff" font-family="Liberation Sans, Arial, sans-serif" textLength="11.4" lengthAdjust="spacingAndGlyphs">30</text>
<text x="809.8" y="121.6" font-size="10" fill="#ffffff" font-family="Liberation Sans, Arial, sans-serif" textLength="11.4" lengthAdjust="spacingAndGlyphs">10</text>
<text x="809.8" y="148.0" font-size="10" fill="#ffffff" font-family="Liberation Sans, Arial, sans-serif" textLength="20" lengthAdjust="spacingAndGlyphs">1.00</text>
<text x="809.8" y="157.5770427743493" font-size="10" fill="#ffffff" font-family="Liberation Sans, Arial, sans-serif" textLength="20" lengthAdjust="spacingAndGlyphs">0.90</text>
<text x="809.8" y="168.2832657225862" font-size="10" fill="#ffffff" font-family="Liberation Sans, Arial, sans-serif" textLength="20" lengthAdjust="spacingAndGlyphs">0.80</text>
<text x="809.8" y="180.42098022501605" font-size="10" fill="#ffffff" font-family="Liberation Sans, Arial, sans-serif" textLength="20" lengthAdjust="spacingAndGlyphs">0.70</text>
<text x="809.8" y="194.4329432947034" font-size="10" fill="#ffffff" font-family="Liberation Sans, Arial, sans-serif" textLength="20" lengthAdjust="spacingAndGlyphs">0.60</text>
<text x="809.8" y="211.00557809247127" font-size="10" fill="#ffffff" font-family="Liberation Sans, Arial, sans-serif" textLength="20" lengthAdjust="spacingAndGlyphs">0.50</text>
<text x="809.8" y="231.28884381505748" font-size="10" fill="#ffffff" font-family="Liberation Sans, Arial, sans-serif" textLength="20" lengthAdjust="spacingAndGlyphs">0.40</text>
<text x="809.8" y="257.4385213871747" font-size="10" fill="#ffffff" font-family="Liberation Sans, Arial, sans-serif" textLength="20" lengthAdjust="spacingAndGlyphs">0.30</text>
<text x="809.8" y="294.2944219075288" font-size="10" fill="#ffffff" font-family="Liberation Sans, Arial, sans-serif" textLength="20" lengthAdjust="spacingAndGlyphs">0.20</text>
<text x="809.8" y="357.30000000000007" font-size="10" fill="#ffffff" font-family="Liberation Sans, Arial, sans-serif" textLength="20" lengthAdjust="spacingAndGlyphs">0.10</text>
<text x="809.8" y="420.30557809247136" font-size="10" fill="#ffffff" font-family="Liberation Sans, Arial, sans-serif" textLength="20" lengthAdjust="spacingAndGlyphs">0.05</text>
<text x="809.6" y="460.8" font-size="10" fill="#ffffff" font-family="Liberation Sans, Arial, sans-serif">0.10</text>
<text x="809.6" y="480.05" font-size="10" fill="#ffffff" font-family="Liberation Sans, Arial, sans-serif">0.05</text>
<text x="809.6" y="499.3" font-size="10" fill="#ffffff" font-family="Liberation Sans, Arial, sans-serif">0.00</text>
<text x="809.6" y="518.55" font-size="10" fill="#ffffff" font-family="Liberation Sans, Arial, sans-serif">-0.05</text>
<text x="809.6" y="537.8" font-size="10" fill="#ffffff" font-family="Liberation Sans, Arial, sans-serif">-0.10</text>
<text x="809.8" y="576.8599999999999" font-size="10" fill="#ffffff" font-family="Liberation Sans, Arial, sans-serif" textLength="11.4" lengthAdjust="spacingAndGlyphs">80</text>
<text x="809.8" y="603.9499999999999" font-size="10" fill="#ffffff" font-family="Liberation Sans, Arial, sans-serif" textLength="11.4" lengthAdjust="spacingAndGlyphs">50</text>
<text x="809.8" y="631.04" font-size="10" fill="#ffffff" font-family="Liberation Sans, Arial, sans-serif" textLength="11.4" lengthAdjust="spacingAndGlyphs">20</text>
<text x="37.4" y="342.1" font-size="10" fill="#ffffff" font-family="Liberation Sans, Arial, sans-serif" text-anchor="end">10M</text>
<line x1="38" x2="41" y1="338.5" y2="338.5" stroke="#ffffff" shape-rendering="crispEdges"/>
<text x="37.4" y="359.20000000000005" font-size="10" fill="#ffffff" font-family="Liberation Sans, Arial, sans-serif" text-anchor="end">8M</text>
<line x1="38" x2="41" y1="356.5" y2="356.5" stroke="#ffffff" shape-rendering="crispEdges"/>
<text x="37.4" y="376.70000000000005" font-size="10" fill="#ffffff" font-family="Liberation Sans, Arial, sans-serif" text-anchor="end">6M</text>
<line x1="38" x2="41" y1="373.5" y2="373.5" stroke="#ffffff" shape-rendering="crispEdges"/>
<text x="37.4" y="395.20000000000005" font-size="10" fill="#ffffff" font-family="Liberation Sans, Arial, sans-serif" text-anchor="end">4M</text>
<line x1="38" x2="41" y1="392.5" y2="392.5" stroke="#ffffff" shape-rendering="crispEdges"/>
<text x="37.4" y="413.1" font-size="10" fill="#ffffff" font-family="Liberation Sans, Arial, sans-serif" text-anchor="end">2M</text>
<line x1="38" x2="41" y1="410.5" y2="410.5" stroke="#ffffff" shape-rendering="crispEdges"/>
<text x="32.6" y="441" font-size="11" fill="#ffffff" font-family="Liberation Sans, Arial, sans-serif" textLength="23.5" lengthAdjust="spacingAndGlyphs" font-weight="bold">2006</text>
<text x="113.5" y="440.7" font-size="9.2" fill="#ffffff" font-family="DejaVu Sans, Verdana, sans-serif" text-anchor="middle">Feb</text>
<text x="177.5" y="440.7" font-size="9.2" fill="#ffffff" font-family="DejaVu Sans, Verdana, sans-serif" text-anchor="middle">Mar</text>
<text x="256.5" y="440.7" font-size="9.2" fill="#ffffff" font-family="DejaVu Sans, Verdana, sans-serif" text-anchor="middle">Apr</text>
<text x="320.5" y="440.7" font-size="9.2" fill="#ffffff" font-family="DejaVu Sans, Verdana, sans-serif" text-anchor="middle">May</text>
<text x="395.5" y="440.7" font-size="9.2" fill="#ffffff" font-family="DejaVu Sans, Verdana, sans-serif" text-anchor="middle">Jun</text>
<text x="470.5" y="440.7" font-size="9.2" fill="#ffffff" font-family="DejaVu Sans, Verdana, sans-serif" text-anchor="middle">Jul</text>
<text x="538.5" y="440.7" font-size="9.2" fill="#ffffff" font-family="DejaVu Sans, Verdana, sans-serif" text-anchor="middle">Aug</text>
<text x="616.5" y="440.7" font-size="9.2" fill="#ffffff" font-family="DejaVu Sans, Verdana, sans-serif" text-anchor="middle">Sep</text>
<text x="684.5" y="440.7" font-size="9.2" fill="#ffffff" font-family="DejaVu Sans, Verdana, sans-serif" text-anchor="middle">Oct</text>
<text x="759.5" y="440.7" font-size="9.2" fill="#ffffff" font-family="DejaVu Sans, Verdana, sans-serif" text-anchor="middle">Nov</text>
<text x="32.6" y="663.3" font-size="11" fill="#ffffff" font-family="Liberation Sans, Arial, sans-serif" textLength="23.5" lengthAdjust="spacingAndGlyphs" font-weight="bold">2006</text>
<text x="113.5" y="663.0" font-size="9.2" fill="#ffffff" font-family="DejaVu Sans, Verdana, sans-serif" text-anchor="middle">Feb</text>
<text x="177.5" y="663.0" font-size="9.2" fill="#ffffff" font-family="DejaVu Sans, Verdana, sans-serif" text-anchor="middle">Mar</text>
<text x="256.5" y="663.0" font-size="9.2" fill="#ffffff" font-family="DejaVu Sans, Verdana, sans-serif" text-anchor="middle">Apr</text>
<text x="320.5" y="663.0" font-size="9.2" fill="#ffffff" font-family="DejaVu Sans, Verdana, sans-serif" text-anchor="middle">May</text>
<text x="395.5" y="663.0" font-size="9.2" fill="#ffffff" font-family="DejaVu Sans, Verdana, sans-serif" text-anchor="middle">Jun</text>
<text x="470.5" y="663.0" font-size="9.2" fill="#ffffff" font-family="DejaVu Sans, Verdana, sans-serif" text-anchor="middle">Jul</text>
<text x="538.5" y="663.0" font-size="9.2" fill="#ffffff" font-family="DejaVu Sans, Verdana, sans-serif" text-anchor="middle">Aug</text>
<text x="616.5" y="663.0" font-size="9.2" fill="#ffffff" font-family="DejaVu Sans, Verdana, sans-serif" text-anchor="middle">Sep</text>
<text x="684.5" y="663.0" font-size="9.2" fill="#ffffff" font-family="DejaVu Sans, Verdana, sans-serif" text-anchor="middle">Oct</text>
<text x="759.5" y="663.0" font-size="9.2" fill="#ffffff" font-family="DejaVu Sans, Verdana, sans-serif" text-anchor="middle">Nov</text>
<rect x="41" y="31.0" width="95.0" height="11" fill="#fff"/>
<text x="55" y="40.1" font-size="10" fill="#000" font-family="DejaVu Sans, Verdana, sans-serif" textLength="79.5" lengthAdjust="spacing">RSI(14) 33.82</text>
<path d="M43 40 L47.4 32.4 L49.6 37 L51.4 34.2 L51.4 40 Z" fill="#a89840"/><path d="M43 40 L47.4 32.4 L49.6 37 L51.4 34.2 L51.4 40" fill="none" stroke="#102040" stroke-width="1"/>
<rect x="41" y="135.1" width="113.80000000000001" height="11" fill="#fff"/>
<text x="55.3" y="144.2" font-size="10" fill="#000" font-family="DejaVu Sans, Verdana, sans-serif" textLength="98" lengthAdjust="spacing">CBAY (Daily) 0.06</text>
<g fill="#000" shape-rendering="crispEdges"><rect x="44" y="136" width="1" height="7"/><rect x="43.5" y="137.5" width="2" height="4" fill="#fff" stroke="#000"/><rect x="46" y="139" width="3" height="4"/><rect x="47" y="139" width="1" height="5"/><rect x="50" y="136" width="1" height="8"/><rect x="49.5" y="137.5" width="2" height="5" fill="#fff" stroke="#000"/></g>
<rect x="41" y="145.7" width="67.9" height="11" fill="#fff"/>
<text x="53.6" y="154.79999999999998" font-size="10" fill="#1c2c90" font-family="DejaVu Sans, Verdana, sans-serif" textLength="53.8" lengthAdjust="spacingAndGlyphs">MA(50) 0.12</text>
<rect x="43" y="150" width="9" height="2" fill="#1c2c90"/>
<rect x="41" y="156.7" width="72.9" height="11" fill="#fff"/>
<text x="53.6" y="165.79999999999998" font-size="10" fill="#f00000" font-family="DejaVu Sans, Verdana, sans-serif" textLength="58.8" lengthAdjust="spacingAndGlyphs">MA(200) 0.33</text>
<rect x="43" y="161" width="9" height="2" fill="#f00000"/>
<rect x="41" y="167.3" width="136.6" height="11" fill="#fff"/>
<text x="53.6" y="176.4" font-size="10" fill="#0a5a0a" font-family="DejaVu Sans, Verdana, sans-serif" textLength="122.5" lengthAdjust="spacingAndGlyphs">BB(20,2.0) 0.04 - 0.08 - 0.12</text>
<rect x="43" y="172" width="9" height="2" fill="#0a5a0a"/>
<rect x="41" y="177.6" width="91.1" height="12" fill="#fff"/>
<text x="53.6" y="187.2" font-size="10" fill="#2a4a6c" font-family="DejaVu Sans, Verdana, sans-serif" textLength="77" lengthAdjust="spacingAndGlyphs">Volume 5,434,251</text>
<g fill="#58708c" stroke="#1c3050" stroke-width=".8"><rect x="43.4" y="182" width="2" height="4.6"/><rect x="45.6" y="179.6" width="2.2" height="7"/><rect x="48" y="181" width="2" height="5.6"/><rect x="50" y="182" width="1.8" height="4.6"/></g>
<rect x="41" y="447.0" width="231.0" height="11" fill="#fff"/>
<text x="55.3" y="456.1" font-size="10" fill="#000" font-family="DejaVu Sans, Verdana, sans-serif" textLength="84.7" lengthAdjust="spacing">MACD(12,26,9)</text>
<text x="144.7" y="456.1" font-size="10" fill="#1c3050" font-family="DejaVu Sans, Verdana, sans-serif" textLength="34.8" lengthAdjust="spacing">-0.018</text>
<text x="179.8" y="456.1" font-size="10" fill="#1c3050" font-family="DejaVu Sans, Verdana, sans-serif">,</text>
<text x="189.9" y="456.1" font-size="10" fill="#8a2a44" font-family="DejaVu Sans, Verdana, sans-serif" textLength="34.8" lengthAdjust="spacing">-0.018</text>
<text x="225" y="456.1" font-size="10" fill="#8a2a44" font-family="DejaVu Sans, Verdana, sans-serif">,</text>
<text x="235.3" y="456.1" font-size="10" fill="#908030" font-family="DejaVu Sans, Verdana, sans-serif" textLength="35.2" lengthAdjust="spacing">-0.000</text>
<rect x="43" y="451" width="9" height="2" fill="#1c3050"/>
<rect x="41" y="551.0" width="227.5" height="11" fill="#fff"/>
<text x="55.3" y="560.1" font-size="10" fill="#000" font-family="DejaVu Sans, Verdana, sans-serif" textLength="136.5" lengthAdjust="spacing">Slow STO %K(14) %D(3)</text>
<text x="196.5" y="560.1" font-size="10" fill="#1c3050" font-family="DejaVu Sans, Verdana, sans-serif" textLength="31.7" lengthAdjust="spacing">21.16</text>
<text x="228.6" y="560.1" font-size="10" fill="#1c3050" font-family="DejaVu Sans, Verdana, sans-serif">,</text>
<text x="237" y="560.1" font-size="10" fill="#8a2a44" font-family="DejaVu Sans, Verdana, sans-serif" textLength="30" lengthAdjust="spacing">16.47</text>
<rect x="43" y="555" width="9" height="2" fill="#1c3050"/>
</svg>
</body></html>
